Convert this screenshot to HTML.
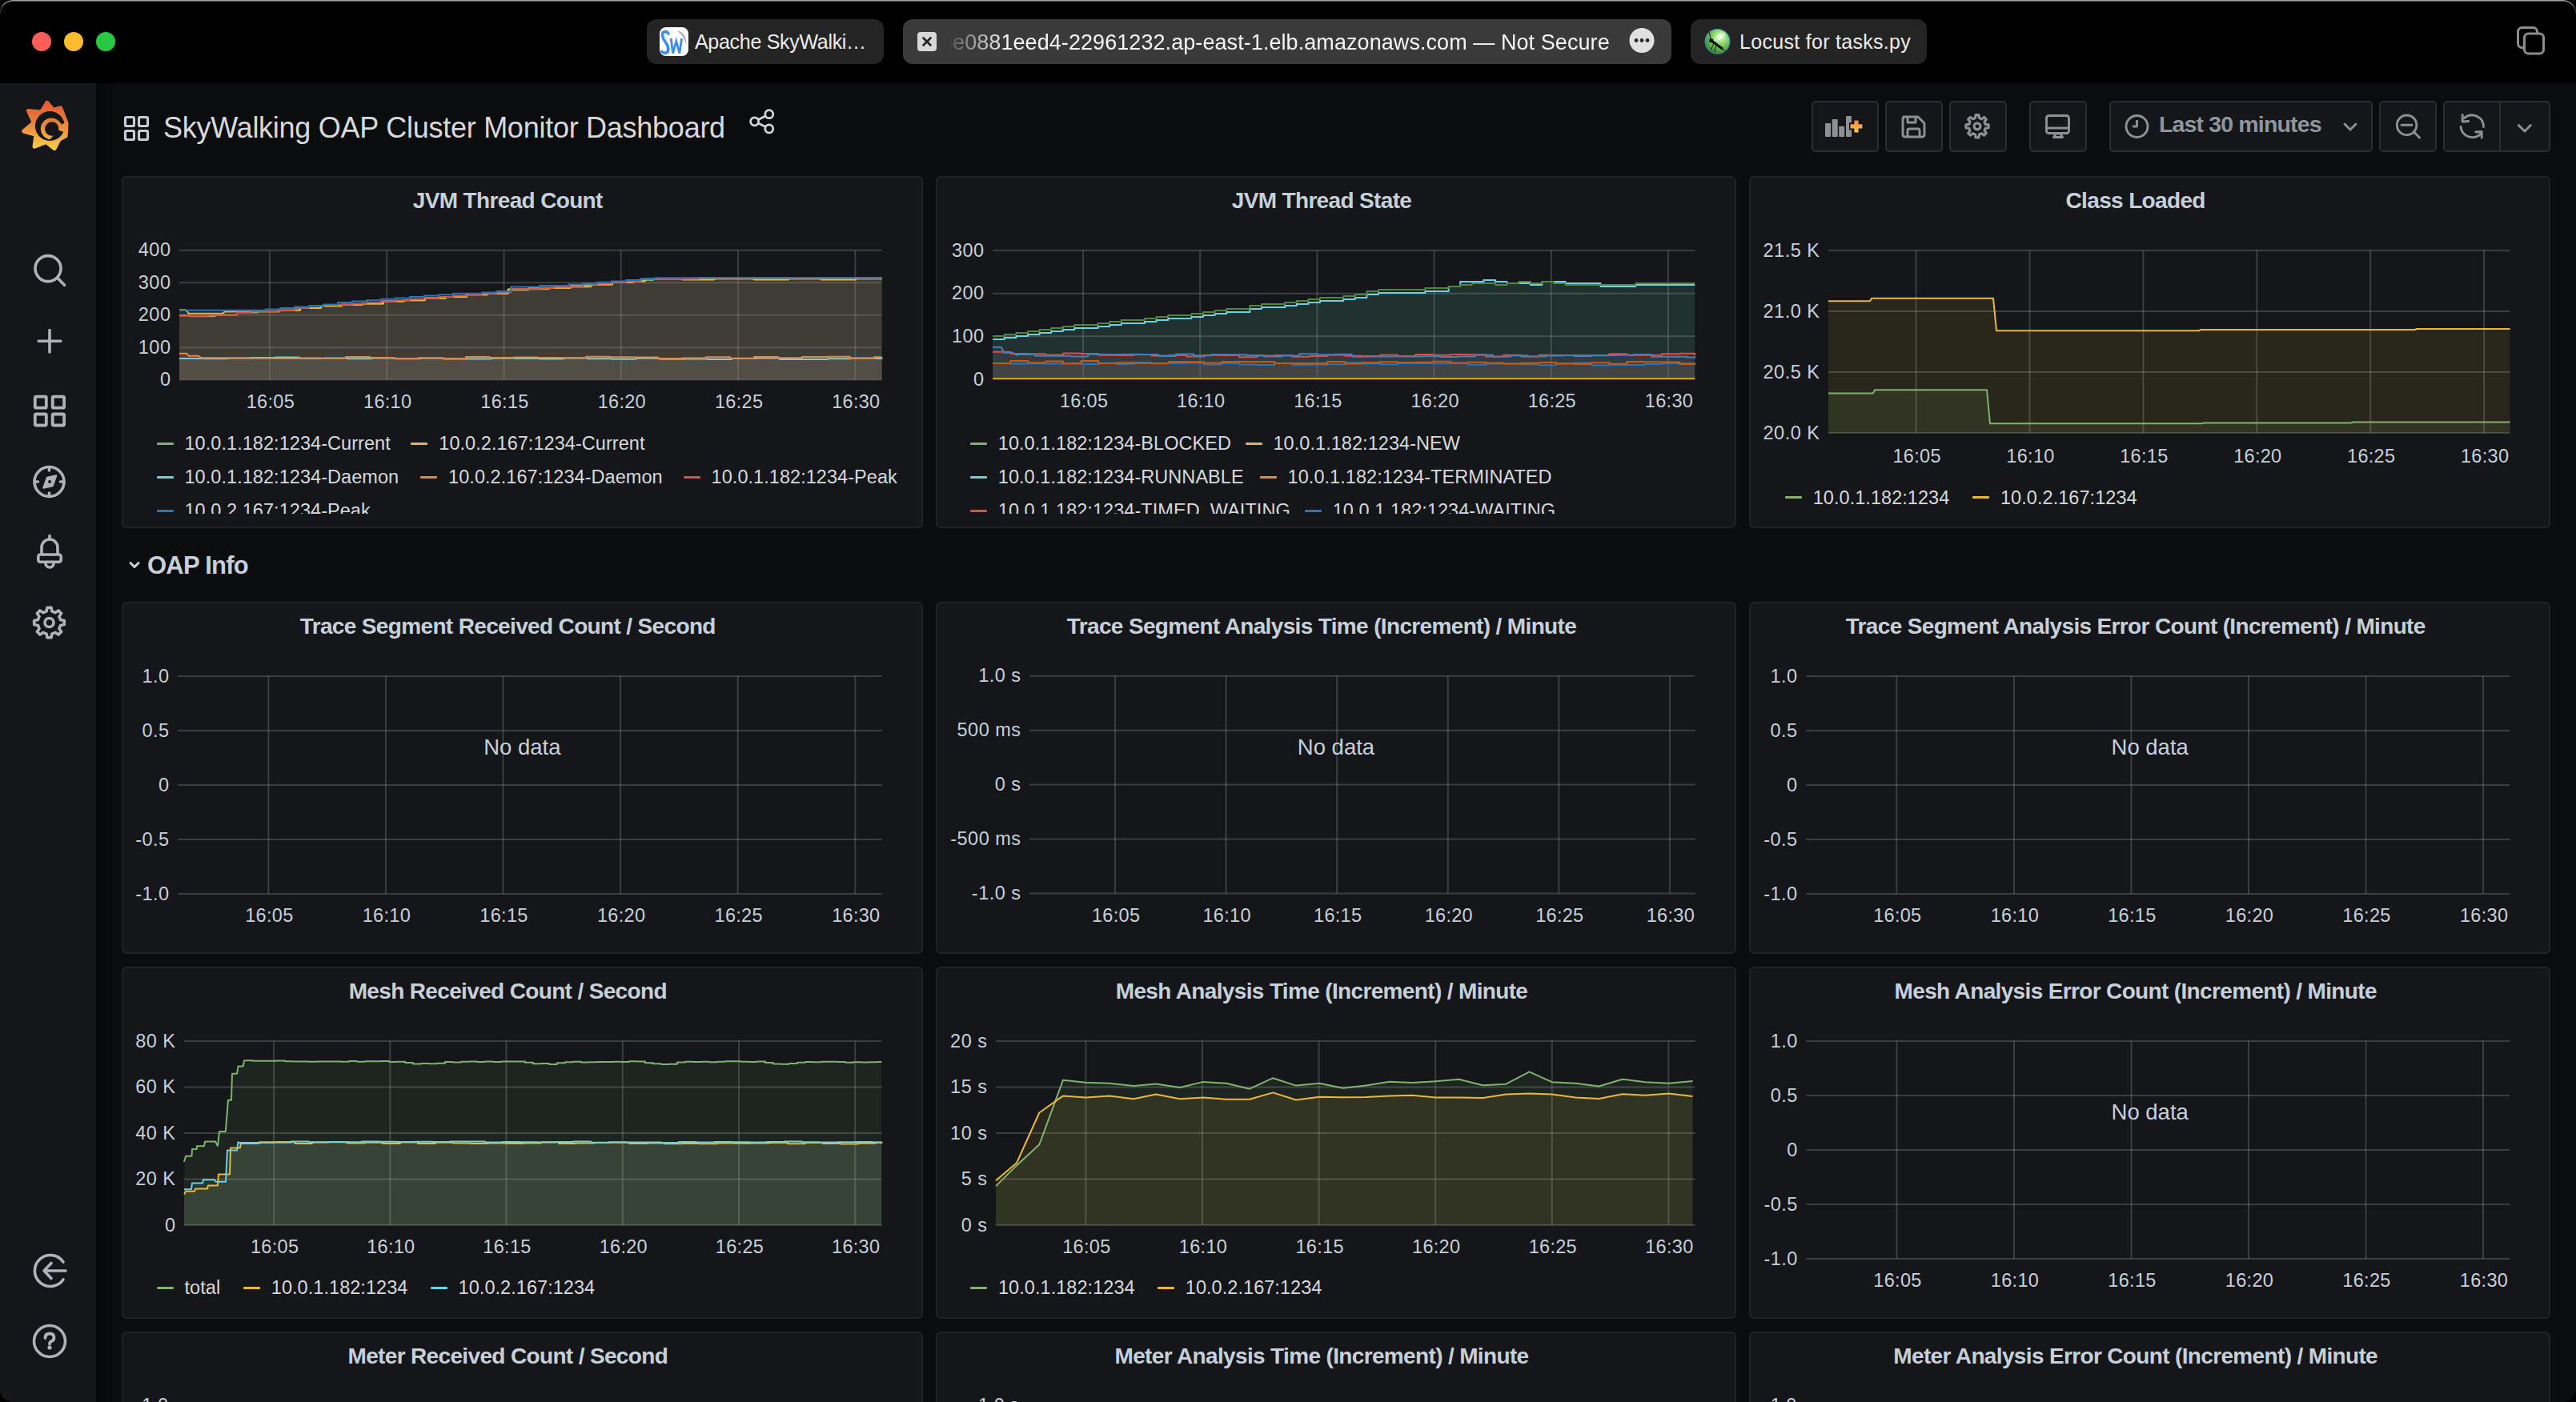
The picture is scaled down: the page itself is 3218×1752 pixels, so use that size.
<!DOCTYPE html><html><head><meta charset="utf-8"><style>
html,body{margin:0;padding:0;background:#000;width:3218px;height:1752px;overflow:hidden}
.win{position:absolute;left:0;top:0;width:3218px;height:1752px;border-radius:16px;overflow:hidden;background:#0b0c0e;font-family:"Liberation Sans", sans-serif}
.abs{position:absolute}
svg.abs{overflow:visible}
.tab{position:absolute;top:24px;height:56px;border-radius:12px}
.tabtxt{position:absolute;top:34px;font-size:25px;line-height:36px;color:#ececec;white-space:nowrap}
.panel{position:absolute;box-sizing:border-box;background:#141619;border:2px solid #202226;border-radius:6px}
.ptitle{position:absolute;width:1000px;text-align:center;font-size:28px;line-height:36px;font-weight:700;color:#c7d0d9;letter-spacing:-0.65px;white-space:nowrap}
.ax text{font-family:"Liberation Sans", sans-serif;font-size:23.5px;fill:#c7d0d9}
.ldash{position:absolute;width:21px;height:3px;border-radius:1px}
.ltext{position:absolute;font-size:23.5px;line-height:28px;color:#d8d9da;white-space:nowrap;letter-spacing:0.05px}
.nodata{position:absolute;width:400px;text-align:center;font-size:27.5px;line-height:30px;color:#c7d0d9;white-space:nowrap}
.dtitle{font-size:36px;line-height:44px;color:#d8d9da;letter-spacing:-0.26px;white-space:nowrap}
.btn{position:absolute;top:126px;height:64px;box-sizing:border-box;background:#141619;border:2px solid #2a2c31;border-radius:5px}
.tp{font-size:28.5px;line-height:36px;font-weight:700;color:#91959c;letter-spacing:-0.85px;white-space:nowrap}
.rowt{font-size:31px;line-height:36px;font-weight:700;color:#c7d0d9;letter-spacing:-0.75px;white-space:nowrap}
</style></head><body><div class="win"><div class="abs" style="left:0;top:0;width:3218px;height:104px;background:#000"></div>
<div class="abs" style="left:0;top:0;width:3218px;height:60px;border-radius:16px 16px 0 0;box-shadow:inset 0 1.5px 0 #a3a3a3"></div>
<div class="abs" style="left:40px;top:40px;width:24px;height:24px;border-radius:50%;background:#fe5f57"></div>
<div class="abs" style="left:80px;top:40px;width:24px;height:24px;border-radius:50%;background:#febc2e"></div>
<div class="abs" style="left:120px;top:40px;width:24px;height:24px;border-radius:50%;background:#28c840"></div>
<div class="tab" style="left:808px;width:296px;background:#242424"></div>
<svg class="abs" style="left:824px;top:34px" width="36" height="36"><rect x="0" y="0" width="36" height="36" rx="8" fill="#fff"/><path d="M11,8 Q9.5,5.2 6.5,5.5 Q3.2,6 3.5,10.5 Q4,14.5 7.5,19 Q11,23.5 10.8,28 Q10.5,32.3 6.5,32.3 Q4.2,32.3 2.8,30.5" fill="none" stroke="#3d8ef0" stroke-width="3.6" stroke-linecap="round"/><path d="M14.2,14 L16.6,32.5 L20.8,17.5 L24.8,32.5 L27.6,14" fill="none" stroke="#3d8ef0" stroke-width="2.8"/><path d="M22,4.5 Q34,6 33.2,22.5 Q31,11.5 22,4.5 Z" fill="#b3b3b3"/></svg>
<div class="tabtxt" style="left:868px;letter-spacing:-0.3px">Apache SkyWalki…</div>
<div class="tab" style="left:1128px;width:960px;background:#3a3a3a"></div>
<svg class="abs" style="left:1146px;top:40px" width="24" height="24"><rect width="24" height="24" rx="4" fill="#d8d8d8"/><path d="M7.5,7.5 L16.5,16.5 M16.5,7.5 L7.5,16.5" stroke="#222" stroke-width="2.6" stroke-linecap="round"/></svg>
<div class="abs" style="left:1188px;top:24px;width:840px;height:56px;overflow:hidden;-webkit-mask-image:linear-gradient(90deg,rgba(0,0,0,.15) 0,rgba(0,0,0,.45) 22px,rgba(0,0,0,1) 68px);mask-image:linear-gradient(90deg,rgba(0,0,0,.15) 0,rgba(0,0,0,.45) 22px,rgba(0,0,0,1) 68px)"><div class="tabtxt" style="left:-13px;top:11px;font-size:27px;letter-spacing:0.07px;color:#f4f4f4">de0881eed4-22961232.ap-east-1.elb.amazonaws.com — Not Secure</div></div>
<svg class="abs" style="left:2035px;top:35px" width="32" height="32"><circle cx="16" cy="15.5" r="15.5" fill="#e0e0e0"/><circle cx="9" cy="15.5" r="2.4" fill="#2a2a2a"/><circle cx="16" cy="15.5" r="2.4" fill="#2a2a2a"/><circle cx="23" cy="15.5" r="2.4" fill="#2a2a2a"/></svg>
<div class="tab" style="left:2112px;width:295px;background:#242424"></div>
<svg class="abs" style="left:2129px;top:35px" width="33" height="33"><defs><radialGradient id="lg" cx="0.62" cy="0.32" r="0.75"><stop offset="0" stop-color="#f0fff0"/><stop offset="0.3" stop-color="#9ee07e"/><stop offset="0.75" stop-color="#4fa53e"/><stop offset="1" stop-color="#2c6e36"/></radialGradient></defs><circle cx="16.5" cy="16.8" r="15.3" fill="url(#lg)" stroke="#3f9aa0" stroke-width="1.2"/><path d="M9,16 L22,25.5" stroke="#0c0c0c" stroke-width="3.2" stroke-linecap="round"/><circle cx="8.6" cy="15.5" r="2.6" fill="#0c0c0c"/><path d="M21,25 L28,30 M12,19 L8,28 M15,21 L13,30 M8,13 L6,5" stroke="#1a1a1a" stroke-width="1" fill="none"/><path d="M12,14 Q18,3 27,6 Q24,14 14,17 Z" fill="#ffffff" fill-opacity="0.35"/></svg>
<div class="tabtxt" style="left:2173px;letter-spacing:0.3px">Locust for tasks.py</div>
<svg class="abs" style="left:3140px;top:30px" width="44" height="44"><rect x="5.5" y="4.5" width="24" height="25" rx="5" fill="none" stroke="#8c8c8c" stroke-width="3"/><rect x="13.5" y="12" width="24" height="25" rx="5" fill="#000" stroke="#8c8c8c" stroke-width="3"/></svg>
<div class="abs" style="left:0;top:104px;width:120px;height:1648px;background:#141619"></div>
<div class="abs" style="left:120px;top:104px;width:60px;height:1648px;background:linear-gradient(90deg,rgba(0,0,0,0.5) 0,rgba(0,0,0,0.22) 10px,rgba(0,0,0,0.06) 28px,rgba(0,0,0,0) 50px)"></div>
<svg class="abs" style="left:0;top:0" width="120" height="220"><defs><linearGradient id="gl" x1="0" y1="128" x2="0" y2="188" gradientUnits="userSpaceOnUse"><stop offset="0" stop-color="#e05a33"/><stop offset="0.45" stop-color="#e9853a"/><stop offset="1" stop-color="#f5d44a"/></linearGradient></defs><path d="M35.4,138.4 L51.8,139.9 L58.8,128.1 L66.5,137.4 L75.6,134.7 L80.1,146.3 L83.0,154.1 L82.7,162.5 L82.0,169.9 L73.9,174.4 L68.0,185.5 L57.8,177.5 L43.0,183.2 L45.0,168.4 L29.7,164.0 L42.3,153.2 Z" fill="url(#gl)" stroke="url(#gl)" stroke-width="5" stroke-linejoin="round"/><circle cx="62.3" cy="157.5" r="18.4" fill="#141619"/><path d="M77.8,161 A13.5,13.5 0 1 0 62.5,174.3 Q64,171.5 67,169.4 A8.7,8.7 0 1 1 73.5,161 Z" fill="url(#gl)"/><path d="M73.3,156.5 L81.5,153.5 L84,166 L73.3,163 Z" fill="url(#gl)"/></svg>
<svg class="abs" style="left:0;top:104px" width="120" height="1648"><g fill="none" stroke="#aeb2b9" stroke-width="3.6" stroke-linecap="round" stroke-linejoin="round"><circle cx="60" cy="231.6" r="16"/><path d="M71.5,243.1 L80.5,252.2"/><path d="M62,308.5 L62,336 M48.2,322.2 L75.8,322.2"/><g stroke-width="3.8"><rect x="43.8" y="391.7" width="14" height="14" rx="1.5"/><rect x="65.7" y="391.7" width="14.4" height="14" rx="1.5"/><rect x="43.8" y="413.5" width="14" height="14" rx="1.5"/><rect x="65.7" y="413.5" width="14.4" height="14" rx="1.5"/></g><circle cx="61.5" cy="498" r="18.5"/><path d="M61.5,479.5 L61.5,484 M61.5,512 L61.5,516.5 M43,498 L47.5,498 M75.5,498 L80,498"/><path d="M52,588 L52,580 A10,10 0 0 1 72,580 L72,588"/><rect x="47.8" y="589" width="28.4" height="9.2" rx="2.5"/><path d="M57,600 A5,5 0 0 0 67,600"/><path d="M62,565.5 L62,569"/><path d="M75.6,670.6 L80.3,671.5 L80.3,676.5 L75.6,677.4 L73.9,681.6 L76.6,685.6 L73.1,689.1 L69.1,686.4 L64.9,688.1 L64.0,692.8 L59.0,692.8 L58.1,688.1 L53.9,686.4 L49.9,689.1 L46.4,685.6 L49.1,681.6 L47.4,677.4 L42.7,676.5 L42.7,671.5 L47.4,670.6 L49.1,666.4 L46.4,662.4 L49.9,658.9 L53.9,661.6 L58.1,659.9 L59.0,655.2 L64.0,655.2 L64.9,659.9 L69.1,661.6 L73.1,658.9 L76.6,662.4 L73.9,666.4 Z" stroke-width="3.6"/><circle cx="61.5" cy="674" r="5.5" stroke-width="3.6"/><path d="M79,1473 A19.5,19.5 0 1 0 79,1495"/><path d="M82,1484 L55,1484 M64,1474.5 L55,1484 L64,1493.5"/><circle cx="62" cy="1572" r="19.5"/></g><path d="M56.5,1568 Q56.5,1562.5 62,1562.5 Q67.5,1562.5 67.5,1567.5 Q67.5,1571 64,1572.3 Q62,1573 62,1575.5" fill="none" stroke="#aeb2b9" stroke-width="3.8" stroke-linecap="round"/><circle cx="62" cy="1580" r="2.6" fill="#aeb2b9"/><path d="M54.5,609.5 L59,597 L70,594.5 L65.5,607 Z" fill="#aeb2b9" stroke="#aeb2b9" stroke-width="2.5" stroke-linejoin="round" transform="translate(0,-104)"/><circle cx="62.1" cy="498" r="2" fill="#141619"/></svg>
<svg class="abs" style="left:150px;top:140px" width="40" height="40"><g fill="none" stroke="#c7ccd4" stroke-width="3.2"><rect x="6.5" y="6.5" width="11" height="11" rx="1.5"/><rect x="23.5" y="6.5" width="11" height="11" rx="1.5"/><rect x="6.5" y="23.5" width="11" height="11" rx="1.5"/><rect x="23.5" y="23.5" width="11" height="11" rx="1.5"/></g></svg>
<div class="abs dtitle" style="left:204px;top:138px">SkyWalking OAP Cluster Monitor Dashboard</div>
<svg class="abs" style="left:930px;top:130px" width="44" height="44"><g fill="none" stroke="#d0d5dd" stroke-width="2.8"><circle cx="12.6" cy="21.8" r="5"/><circle cx="30.8" cy="12.7" r="5"/><circle cx="30.8" cy="30.9" r="5"/><path d="M17.2,19.5 L26.3,15 M17.2,24.1 L26.3,28.6"/></g></svg>
<div class="btn" style="left:2263px;width:84px"></div>
<div class="btn" style="left:2355px;width:72px"></div>
<div class="btn" style="left:2435px;width:72px"></div>
<div class="btn" style="left:2535px;width:72px"></div>
<div class="btn" style="left:2635px;width:329px"></div>
<div class="btn" style="left:2972px;width:72px"></div>
<div class="btn" style="left:3052px;width:134px"></div>
<div class="abs" style="left:3122px;top:127px;width:2px;height:62px;background:#2a2c30"></div>
<svg class="abs" style="left:2263px;top:126px" width="923" height="64"><g fill="#8e9096"><rect x="17" y="28" width="7" height="17" rx="1"/><rect x="25.7" y="23" width="7" height="22" rx="1"/><rect x="34.2" y="31.8" width="7" height="13.2" rx="1"/><rect x="43" y="19" width="7" height="26" rx="1"/></g><defs><linearGradient id="og" x1="0" y1="0" x2="0" y2="1"><stop offset="0" stop-color="#f2854a"/><stop offset="1" stop-color="#f7c744"/></linearGradient></defs><path d="M47,31.8 L65,31.8 M56,23 L56,40.6" stroke="#111" stroke-width="9"/><path d="M48.5,31.8 L63.5,31.8 M56,24.5 L56,39.5" stroke="url(#og)" stroke-width="5.2"/><g fill="none" stroke="#8e9096" stroke-width="2.9" stroke-linejoin="round"><path d="M115,20 L133,20 L141,28 L141,42 Q141,45 138,45 L117,45 Q114,45 114,42 L114,23 Q114,20 117,20 Z"/><path d="M120,21 L120,27 L130,27 L130,21"/><path d="M120,44 L120,37 Q120,35 122,35 L133,35 Q135,35 135,37 L135,44"/><path d="M217.2,29.3 L221.1,29.9 L221.1,33.7 L217.2,34.3 L216.0,37.3 L218.3,40.4 L215.6,43.1 L212.5,40.8 L209.5,42.0 L208.9,45.9 L205.1,45.9 L204.5,42.0 L201.5,40.8 L198.4,43.1 L195.7,40.4 L198.0,37.3 L196.8,34.3 L192.9,33.7 L192.9,29.9 L196.8,29.3 L198.0,26.3 L195.7,23.2 L198.4,20.5 L201.5,22.8 L204.5,21.6 L205.1,17.7 L208.9,17.7 L209.5,21.6 L212.5,22.8 L215.6,20.5 L218.3,23.2 L216.0,26.3 Z" stroke-width="3.2"/><circle cx="207" cy="31.8" r="4.0" stroke-width="3.2"/><rect x="293.5" y="18.5" width="28" height="22" rx="3"/><path d="M294,34 L321,34"/><path d="M302.5,45.5 L313.5,45.5 L311,41 L305,41 Z"/><circle cx="406.5" cy="32" r="13.5"/><path d="M406.5,24 L406.5,32 L401,32"/><path d="M666,29 L673,36 L680,29" stroke-linecap="round"/><circle cx="743.6" cy="30.3" r="12.3"/><path d="M737,30.3 L750,30.3 M752.5,39 L759.5,46" stroke-linecap="round"/><path d="M815.5,21.5 A14.5,14.5 0 0 1 839.5,32.6" stroke-linecap="round"/><path d="M811,32.5 A14.5,14.5 0 0 0 836.5,40.5" stroke-linecap="round"/><path d="M813.2,17.5 L813.2,26 L820.7,25.5 M829.7,39 L837.2,38.5 L837.2,46" stroke-linecap="round"/><path d="M883.3,30.6 L891,38 L898.3,30.6" stroke-linecap="round"/></g></svg>
<div class="abs tp" style="left:2697px;top:137px">Last 30 minutes</div>
<svg class="abs" style="left:155px;top:692px" width="28" height="24"><path d="M8,11.5 L13,16.5 L18,11.5" fill="none" stroke="#c7d0d9" stroke-width="3" stroke-linecap="round" stroke-linejoin="round"/></svg>
<div class="abs rowt" style="left:184px;top:688.5px">OAP Info</div>
<div class="panel" style="left:152.00px;top:220px;width:1000.67px;height:440px"></div>
<div class="ptitle" style="left:134.3px;top:232.5px">JVM Thread Count</div>
<div class="panel" style="left:1168.67px;top:220px;width:1000.67px;height:440px"></div>
<div class="ptitle" style="left:1151.0px;top:232.5px">JVM Thread State</div>
<div class="panel" style="left:2185.33px;top:220px;width:1000.67px;height:440px"></div>
<div class="ptitle" style="left:2167.7px;top:232.5px">Class Loaded</div>
<svg class="abs" width="3218" height="1752" style="left:0;top:0"><g stroke="rgba(200,200,200,0.22)" stroke-width="2"><line x1="224.0" y1="312.8" x2="1101.7" y2="312.8"/><line x1="224.0" y1="353.2" x2="1101.7" y2="353.2"/><line x1="224.0" y1="393.7" x2="1101.7" y2="393.7"/><line x1="224.0" y1="434.2" x2="1101.7" y2="434.2"/><line x1="224.0" y1="474.6" x2="1101.7" y2="474.6"/><line x1="336.9" y1="312.8" x2="336.9" y2="474.6"/><line x1="483.2" y1="312.8" x2="483.2" y2="474.6"/><line x1="629.5" y1="312.8" x2="629.5" y2="474.6"/><line x1="775.8" y1="312.8" x2="775.8" y2="474.6"/><line x1="922.1" y1="312.8" x2="922.1" y2="474.6"/><line x1="1068.3" y1="312.8" x2="1068.3" y2="474.6"/></g>
<path d="M224.0,394.0 L236.0,394.0 L238.0,395.2 L268.0,395.2 L270.0,393.4 L296.0,393.4 L296.0,390.6 L322.0,390.6 L322.0,389.2 L348.0,389.2 L348.0,387.8 L374.0,387.8 L374.0,385.0 L400.0,385.0 L400.0,382.2 L426.0,382.2 L426.0,380.8 L452.0,380.8 L452.0,379.4 L478.0,379.4 L478.0,376.6 L504.0,376.6 L504.0,375.2 L530.0,375.2 L530.0,372.4 L556.0,372.4 L556.0,371.0 L582.0,371.0 L582.0,368.2 L608.0,368.2 L608.0,366.8 L634.0,366.8 L634.0,362.6 L660.0,362.6 L660.0,361.2 L686.0,361.2 L686.0,359.8 L712.0,359.8 L712.0,358.4 L738.0,358.4 L738.0,355.6 L764.0,355.6 L764.0,352.8 L790.0,352.8 L790.0,350.0 L816.0,350.0 L816.0,348.6 L842.0,348.6 L842.0,348.6 L868.0,348.6 L868.0,348.6 L894.0,348.6 L894.0,348.6 L920.0,348.6 L920.0,348.6 L946.0,348.6 L946.0,348.6 L972.0,348.6 L972.0,348.6 L998.0,348.6 L998.0,348.6 L1024.0,348.6 L1024.0,348.6 L1050.0,348.6 L1050.0,348.6 L1076.0,348.6 L1076.0,348.6 L1101.7,348.6 L1101.7,348.6 L1101.7,474.6 L224.0,474.6 Z" fill="#7EB26D" fill-opacity="0.1" stroke="none"/>
<path d="M224.0,387.2 L232.0,387.2 L236.0,391.8 L278.0,391.8 L281.0,389.4 L296.0,389.4 L297.0,389.2 L323.0,389.2 L323.0,389.2 L349.0,389.2 L349.0,387.8 L375.0,387.8 L375.0,385.0 L401.0,385.0 L401.0,382.2 L427.0,382.2 L427.0,380.8 L453.0,380.8 L453.0,379.4 L479.0,379.4 L479.0,376.6 L505.0,376.6 L505.0,375.2 L531.0,375.2 L531.0,372.4 L557.0,372.4 L557.0,371.0 L583.0,371.0 L583.0,368.2 L609.0,368.2 L609.0,366.8 L635.0,366.8 L635.0,361.2 L661.0,361.2 L661.0,359.8 L687.0,359.8 L687.0,359.8 L713.0,359.8 L713.0,357.0 L739.0,357.0 L739.0,355.6 L765.0,355.6 L765.0,352.8 L791.0,352.8 L791.0,351.4 L806.0,351.4 L806.0,348.6 L852.0,348.0 L853.0,349.5 L892.0,349.5 L893.0,348.0 L941.0,348.0 L942.0,349.5 L985.0,349.5 L986.0,348.0 L1025.0,348.0 L1026.0,349.5 L1069.0,349.5 L1070.0,347.5 L1101.7,347.5 L1101.7,474.6 L224.0,474.6 Z" fill="#EAB839" fill-opacity="0.1" stroke="none"/>
<path d="M224.0,448.1 L254.0,448.1 L254.0,448.2 L284.0,448.2 L284.0,447.5 L314.0,447.5 L314.0,447.1 L344.0,447.1 L344.0,446.6 L374.0,446.6 L374.0,448.0 L404.0,448.0 L404.0,447.6 L434.0,447.6 L434.0,448.3 L464.0,448.3 L464.0,447.5 L494.0,447.5 L494.0,448.3 L524.0,448.3 L524.0,447.4 L554.0,447.4 L554.0,448.5 L584.0,448.5 L584.0,448.4 L614.0,448.4 L614.0,447.8 L644.0,447.8 L644.0,448.1 L674.0,448.1 L674.0,448.4 L704.0,448.4 L704.0,447.4 L734.0,447.4 L734.0,448.2 L764.0,448.2 L764.0,448.7 L794.0,448.7 L794.0,447.7 L824.0,447.7 L824.0,448.8 L854.0,448.8 L854.0,448.6 L884.0,448.6 L884.0,448.9 L914.0,448.9 L914.0,448.0 L944.0,448.0 L944.0,447.5 L974.0,447.5 L974.0,449.0 L1004.0,449.0 L1004.0,449.0 L1034.0,449.0 L1034.0,448.3 L1064.0,448.3 L1064.0,447.6 L1094.0,447.6 L1094.0,447.9 L1101.7,447.9 L1101.7,448.8 L1101.7,474.6 L224.0,474.6 Z" fill="#6ED0E0" fill-opacity="0.1" stroke="none"/>
<path d="M224.0,441.7 L233.0,441.7 L236.0,444.8 L248.0,444.8 L251.0,447.0 L252.0,447.3 L282.0,447.3 L282.0,447.6 L312.0,447.6 L312.0,447.7 L342.0,447.7 L342.0,448.1 L372.0,448.1 L372.0,447.6 L402.0,447.6 L402.0,448.0 L432.0,448.0 L432.0,445.9 L462.0,445.9 L462.0,446.9 L492.0,446.9 L492.0,448.1 L522.0,448.1 L522.0,447.4 L552.0,447.4 L552.0,448.0 L582.0,448.0 L582.0,446.1 L612.0,446.1 L612.0,446.9 L642.0,446.9 L642.0,446.4 L672.0,446.4 L672.0,447.1 L702.0,447.1 L702.0,447.2 L732.0,447.2 L732.0,445.8 L762.0,445.8 L762.0,446.3 L792.0,446.3 L792.0,446.5 L822.0,446.5 L822.0,448.0 L852.0,448.0 L852.0,447.6 L882.0,447.6 L882.0,446.2 L912.0,446.2 L912.0,447.7 L942.0,447.7 L942.0,446.1 L972.0,446.1 L972.0,447.3 L1002.0,447.3 L1002.0,446.1 L1032.0,446.1 L1032.0,445.8 L1062.0,445.8 L1062.0,447.9 L1092.0,447.9 L1092.0,446.3 L1101.7,446.3 L1101.7,446.3 L1101.7,474.6 L224.0,474.6 Z" fill="#EF843C" fill-opacity="0.1" stroke="none"/>
<path d="M224.0,394.8 L242.0,394.8 L242.0,394.8 L260.0,394.8 L260.0,393.4 L278.0,393.4 L278.0,393.4 L296.0,393.4 L296.0,390.6 L314.0,390.6 L314.0,389.2 L332.0,389.2 L332.0,389.2 L350.0,389.2 L350.0,387.8 L368.0,387.8 L368.0,385.0 L386.0,385.0 L386.0,382.2 L404.0,382.2 L404.0,380.8 L422.0,380.8 L422.0,380.8 L440.0,380.8 L440.0,379.4 L458.0,379.4 L458.0,378.0 L476.0,378.0 L476.0,376.6 L494.0,376.6 L494.0,375.2 L512.0,375.2 L512.0,373.8 L530.0,373.8 L530.0,372.4 L548.0,372.4 L548.0,371.0 L566.0,371.0 L566.0,369.6 L584.0,369.6 L584.0,368.2 L602.0,368.2 L602.0,366.8 L620.0,366.8 L620.0,365.4 L638.0,365.4 L638.0,361.2 L656.0,361.2 L656.0,361.2 L674.0,361.2 L674.0,359.8 L692.0,359.8 L692.0,358.4 L710.0,358.4 L710.0,358.4 L728.0,358.4 L728.0,355.6 L746.0,355.6 L746.0,354.2 L764.0,354.2 L764.0,352.8 L782.0,352.8 L782.0,351.4 L800.0,351.4 L800.0,348.6 L818.0,348.6 L818.0,348.6 L836.0,348.6 L836.0,348.6 L854.0,348.6 L854.0,348.6 L872.0,348.6 L872.0,347.2 L890.0,347.2 L890.0,347.2 L908.0,347.2 L908.0,347.2 L926.0,347.2 L926.0,347.2 L944.0,347.2 L944.0,347.2 L962.0,347.2 L962.0,347.2 L980.0,347.2 L980.0,347.2 L998.0,347.2 L998.0,347.2 L1016.0,347.2 L1016.0,347.2 L1034.0,347.2 L1034.0,347.2 L1052.0,347.2 L1052.0,347.2 L1070.0,347.2 L1070.0,347.2 L1088.0,347.2 L1088.0,347.2 L1101.7,347.2 L1101.7,347.2 L1101.7,474.6 L224.0,474.6 Z" fill="#E24D42" fill-opacity="0.1" stroke="none"/>
<path d="M224.0,387.8 L242.0,387.8 L242.0,387.8 L260.0,387.8 L260.0,387.8 L278.0,387.8 L278.0,387.8 L296.0,387.8 L296.0,387.8 L314.0,387.8 L314.0,387.8 L332.0,387.8 L332.0,386.4 L350.0,386.4 L350.0,385.0 L368.0,385.0 L368.0,383.6 L386.0,383.6 L386.0,382.2 L404.0,382.2 L404.0,380.8 L422.0,380.8 L422.0,378.0 L440.0,378.0 L440.0,376.6 L458.0,376.6 L458.0,375.2 L476.0,375.2 L476.0,373.8 L494.0,373.8 L494.0,372.4 L512.0,372.4 L512.0,371.0 L530.0,371.0 L530.0,369.6 L548.0,369.6 L548.0,368.2 L566.0,368.2 L566.0,366.8 L584.0,366.8 L584.0,366.8 L602.0,366.8 L602.0,365.4 L620.0,365.4 L620.0,364.0 L638.0,364.0 L638.0,358.4 L656.0,358.4 L656.0,358.4 L674.0,358.4 L674.0,357.0 L692.0,357.0 L692.0,357.0 L710.0,357.0 L710.0,355.6 L728.0,355.6 L728.0,354.2 L746.0,354.2 L746.0,352.8 L764.0,352.8 L764.0,351.4 L782.0,351.4 L782.0,350.0 L800.0,350.0 L800.0,348.6 L818.0,348.6 L818.0,347.2 L836.0,347.2 L836.0,347.2 L854.0,347.2 L854.0,347.2 L872.0,347.2 L872.0,347.2 L890.0,347.2 L890.0,347.2 L908.0,347.2 L908.0,347.2 L926.0,347.2 L926.0,347.2 L944.0,347.2 L944.0,347.2 L962.0,347.2 L962.0,347.2 L980.0,347.2 L980.0,347.2 L998.0,347.2 L998.0,347.2 L1016.0,347.2 L1016.0,347.2 L1034.0,347.2 L1034.0,347.2 L1052.0,347.2 L1052.0,347.2 L1070.0,347.2 L1070.0,347.2 L1088.0,347.2 L1088.0,347.2 L1101.7,347.2 L1101.7,347.2 L1101.7,474.6 L224.0,474.6 Z" fill="#1F78C1" fill-opacity="0.1" stroke="none"/>
<path d="M224.0,394.0 L236.0,394.0 L238.0,395.2 L268.0,395.2 L270.0,393.4 L296.0,393.4 L296.0,390.6 L322.0,390.6 L322.0,389.2 L348.0,389.2 L348.0,387.8 L374.0,387.8 L374.0,385.0 L400.0,385.0 L400.0,382.2 L426.0,382.2 L426.0,380.8 L452.0,380.8 L452.0,379.4 L478.0,379.4 L478.0,376.6 L504.0,376.6 L504.0,375.2 L530.0,375.2 L530.0,372.4 L556.0,372.4 L556.0,371.0 L582.0,371.0 L582.0,368.2 L608.0,368.2 L608.0,366.8 L634.0,366.8 L634.0,362.6 L660.0,362.6 L660.0,361.2 L686.0,361.2 L686.0,359.8 L712.0,359.8 L712.0,358.4 L738.0,358.4 L738.0,355.6 L764.0,355.6 L764.0,352.8 L790.0,352.8 L790.0,350.0 L816.0,350.0 L816.0,348.6 L842.0,348.6 L842.0,348.6 L868.0,348.6 L868.0,348.6 L894.0,348.6 L894.0,348.6 L920.0,348.6 L920.0,348.6 L946.0,348.6 L946.0,348.6 L972.0,348.6 L972.0,348.6 L998.0,348.6 L998.0,348.6 L1024.0,348.6 L1024.0,348.6 L1050.0,348.6 L1050.0,348.6 L1076.0,348.6 L1076.0,348.6 L1101.7,348.6 L1101.7,348.6" fill="none" stroke="#7EB26D" stroke-width="2" stroke-linejoin="round"/>
<path d="M224.0,387.2 L232.0,387.2 L236.0,391.8 L278.0,391.8 L281.0,389.4 L296.0,389.4 L297.0,389.2 L323.0,389.2 L323.0,389.2 L349.0,389.2 L349.0,387.8 L375.0,387.8 L375.0,385.0 L401.0,385.0 L401.0,382.2 L427.0,382.2 L427.0,380.8 L453.0,380.8 L453.0,379.4 L479.0,379.4 L479.0,376.6 L505.0,376.6 L505.0,375.2 L531.0,375.2 L531.0,372.4 L557.0,372.4 L557.0,371.0 L583.0,371.0 L583.0,368.2 L609.0,368.2 L609.0,366.8 L635.0,366.8 L635.0,361.2 L661.0,361.2 L661.0,359.8 L687.0,359.8 L687.0,359.8 L713.0,359.8 L713.0,357.0 L739.0,357.0 L739.0,355.6 L765.0,355.6 L765.0,352.8 L791.0,352.8 L791.0,351.4 L806.0,351.4 L806.0,348.6 L852.0,348.0 L853.0,349.5 L892.0,349.5 L893.0,348.0 L941.0,348.0 L942.0,349.5 L985.0,349.5 L986.0,348.0 L1025.0,348.0 L1026.0,349.5 L1069.0,349.5 L1070.0,347.5 L1101.7,347.5" fill="none" stroke="#EAB839" stroke-width="2" stroke-linejoin="round"/>
<path d="M224.0,448.1 L254.0,448.1 L254.0,448.2 L284.0,448.2 L284.0,447.5 L314.0,447.5 L314.0,447.1 L344.0,447.1 L344.0,446.6 L374.0,446.6 L374.0,448.0 L404.0,448.0 L404.0,447.6 L434.0,447.6 L434.0,448.3 L464.0,448.3 L464.0,447.5 L494.0,447.5 L494.0,448.3 L524.0,448.3 L524.0,447.4 L554.0,447.4 L554.0,448.5 L584.0,448.5 L584.0,448.4 L614.0,448.4 L614.0,447.8 L644.0,447.8 L644.0,448.1 L674.0,448.1 L674.0,448.4 L704.0,448.4 L704.0,447.4 L734.0,447.4 L734.0,448.2 L764.0,448.2 L764.0,448.7 L794.0,448.7 L794.0,447.7 L824.0,447.7 L824.0,448.8 L854.0,448.8 L854.0,448.6 L884.0,448.6 L884.0,448.9 L914.0,448.9 L914.0,448.0 L944.0,448.0 L944.0,447.5 L974.0,447.5 L974.0,449.0 L1004.0,449.0 L1004.0,449.0 L1034.0,449.0 L1034.0,448.3 L1064.0,448.3 L1064.0,447.6 L1094.0,447.6 L1094.0,447.9 L1101.7,447.9 L1101.7,448.8" fill="none" stroke="#6ED0E0" stroke-width="2" stroke-linejoin="round"/>
<path d="M224.0,441.7 L233.0,441.7 L236.0,444.8 L248.0,444.8 L251.0,447.0 L252.0,447.3 L282.0,447.3 L282.0,447.6 L312.0,447.6 L312.0,447.7 L342.0,447.7 L342.0,448.1 L372.0,448.1 L372.0,447.6 L402.0,447.6 L402.0,448.0 L432.0,448.0 L432.0,445.9 L462.0,445.9 L462.0,446.9 L492.0,446.9 L492.0,448.1 L522.0,448.1 L522.0,447.4 L552.0,447.4 L552.0,448.0 L582.0,448.0 L582.0,446.1 L612.0,446.1 L612.0,446.9 L642.0,446.9 L642.0,446.4 L672.0,446.4 L672.0,447.1 L702.0,447.1 L702.0,447.2 L732.0,447.2 L732.0,445.8 L762.0,445.8 L762.0,446.3 L792.0,446.3 L792.0,446.5 L822.0,446.5 L822.0,448.0 L852.0,448.0 L852.0,447.6 L882.0,447.6 L882.0,446.2 L912.0,446.2 L912.0,447.7 L942.0,447.7 L942.0,446.1 L972.0,446.1 L972.0,447.3 L1002.0,447.3 L1002.0,446.1 L1032.0,446.1 L1032.0,445.8 L1062.0,445.8 L1062.0,447.9 L1092.0,447.9 L1092.0,446.3 L1101.7,446.3 L1101.7,446.3" fill="none" stroke="#EF843C" stroke-width="2" stroke-linejoin="round"/>
<path d="M224.0,394.8 L242.0,394.8 L242.0,394.8 L260.0,394.8 L260.0,393.4 L278.0,393.4 L278.0,393.4 L296.0,393.4 L296.0,390.6 L314.0,390.6 L314.0,389.2 L332.0,389.2 L332.0,389.2 L350.0,389.2 L350.0,387.8 L368.0,387.8 L368.0,385.0 L386.0,385.0 L386.0,382.2 L404.0,382.2 L404.0,380.8 L422.0,380.8 L422.0,380.8 L440.0,380.8 L440.0,379.4 L458.0,379.4 L458.0,378.0 L476.0,378.0 L476.0,376.6 L494.0,376.6 L494.0,375.2 L512.0,375.2 L512.0,373.8 L530.0,373.8 L530.0,372.4 L548.0,372.4 L548.0,371.0 L566.0,371.0 L566.0,369.6 L584.0,369.6 L584.0,368.2 L602.0,368.2 L602.0,366.8 L620.0,366.8 L620.0,365.4 L638.0,365.4 L638.0,361.2 L656.0,361.2 L656.0,361.2 L674.0,361.2 L674.0,359.8 L692.0,359.8 L692.0,358.4 L710.0,358.4 L710.0,358.4 L728.0,358.4 L728.0,355.6 L746.0,355.6 L746.0,354.2 L764.0,354.2 L764.0,352.8 L782.0,352.8 L782.0,351.4 L800.0,351.4 L800.0,348.6 L818.0,348.6 L818.0,348.6 L836.0,348.6 L836.0,348.6 L854.0,348.6 L854.0,348.6 L872.0,348.6 L872.0,347.2 L890.0,347.2 L890.0,347.2 L908.0,347.2 L908.0,347.2 L926.0,347.2 L926.0,347.2 L944.0,347.2 L944.0,347.2 L962.0,347.2 L962.0,347.2 L980.0,347.2 L980.0,347.2 L998.0,347.2 L998.0,347.2 L1016.0,347.2 L1016.0,347.2 L1034.0,347.2 L1034.0,347.2 L1052.0,347.2 L1052.0,347.2 L1070.0,347.2 L1070.0,347.2 L1088.0,347.2 L1088.0,347.2 L1101.7,347.2 L1101.7,347.2" fill="none" stroke="#E24D42" stroke-width="2" stroke-linejoin="round"/>
<path d="M224.0,387.8 L242.0,387.8 L242.0,387.8 L260.0,387.8 L260.0,387.8 L278.0,387.8 L278.0,387.8 L296.0,387.8 L296.0,387.8 L314.0,387.8 L314.0,387.8 L332.0,387.8 L332.0,386.4 L350.0,386.4 L350.0,385.0 L368.0,385.0 L368.0,383.6 L386.0,383.6 L386.0,382.2 L404.0,382.2 L404.0,380.8 L422.0,380.8 L422.0,378.0 L440.0,378.0 L440.0,376.6 L458.0,376.6 L458.0,375.2 L476.0,375.2 L476.0,373.8 L494.0,373.8 L494.0,372.4 L512.0,372.4 L512.0,371.0 L530.0,371.0 L530.0,369.6 L548.0,369.6 L548.0,368.2 L566.0,368.2 L566.0,366.8 L584.0,366.8 L584.0,366.8 L602.0,366.8 L602.0,365.4 L620.0,365.4 L620.0,364.0 L638.0,364.0 L638.0,358.4 L656.0,358.4 L656.0,358.4 L674.0,358.4 L674.0,357.0 L692.0,357.0 L692.0,357.0 L710.0,357.0 L710.0,355.6 L728.0,355.6 L728.0,354.2 L746.0,354.2 L746.0,352.8 L764.0,352.8 L764.0,351.4 L782.0,351.4 L782.0,350.0 L800.0,350.0 L800.0,348.6 L818.0,348.6 L818.0,347.2 L836.0,347.2 L836.0,347.2 L854.0,347.2 L854.0,347.2 L872.0,347.2 L872.0,347.2 L890.0,347.2 L890.0,347.2 L908.0,347.2 L908.0,347.2 L926.0,347.2 L926.0,347.2 L944.0,347.2 L944.0,347.2 L962.0,347.2 L962.0,347.2 L980.0,347.2 L980.0,347.2 L998.0,347.2 L998.0,347.2 L1016.0,347.2 L1016.0,347.2 L1034.0,347.2 L1034.0,347.2 L1052.0,347.2 L1052.0,347.2 L1070.0,347.2 L1070.0,347.2 L1088.0,347.2 L1088.0,347.2 L1101.7,347.2 L1101.7,347.2" fill="none" stroke="#1F78C1" stroke-width="2" stroke-linejoin="round"/>
<g class="ax"><text x="213.5" y="320.3" text-anchor="end" letter-spacing="0.5">400</text><text x="213.5" y="360.8" text-anchor="end" letter-spacing="0.5">300</text><text x="213.5" y="401.2" text-anchor="end" letter-spacing="0.5">200</text><text x="213.5" y="441.7" text-anchor="end" letter-spacing="0.5">100</text><text x="213.5" y="482.1" text-anchor="end" letter-spacing="0.5">0</text><text x="337.9" y="509.6" text-anchor="middle" letter-spacing="0.3">16:05</text><text x="484.2" y="509.6" text-anchor="middle" letter-spacing="0.3">16:10</text><text x="630.5" y="509.6" text-anchor="middle" letter-spacing="0.3">16:15</text><text x="776.8" y="509.6" text-anchor="middle" letter-spacing="0.3">16:20</text><text x="923.1" y="509.6" text-anchor="middle" letter-spacing="0.3">16:25</text><text x="1069.3" y="509.6" text-anchor="middle" letter-spacing="0.3">16:30</text></g></svg>
<div class="abs" style="left:154px;top:525px;width:996px;height:117px;overflow:hidden">
<div class="ldash" style="left:41.5px;top:27.7px;background:#7EB26D"></div>
<div class="ltext" style="left:76.5px;top:15.2px">10.0.1.182:1234-Current</div>
<div class="ldash" style="left:359.3px;top:27.7px;background:#EAB839"></div>
<div class="ltext" style="left:394.3px;top:15.2px">10.0.2.167:1234-Current</div>
<div class="ldash" style="left:41.5px;top:69.7px;background:#6ED0E0"></div>
<div class="ltext" style="left:76.5px;top:57.2px">10.0.1.182:1234-Daemon</div>
<div class="ldash" style="left:371.1px;top:69.7px;background:#EF843C"></div>
<div class="ltext" style="left:406.1px;top:57.2px">10.0.2.167:1234-Daemon</div>
<div class="ldash" style="left:699.6px;top:69.7px;background:#E24D42"></div>
<div class="ltext" style="left:734.6px;top:57.2px">10.0.1.182:1234-Peak</div>
<div class="ldash" style="left:41.5px;top:111.7px;background:#1F78C1"></div>
<div class="ltext" style="left:76.5px;top:99.2px">10.0.2.167:1234-Peak</div>
</div>
<svg class="abs" width="3218" height="1752" style="left:0;top:0"><g stroke="rgba(200,200,200,0.22)" stroke-width="2"><line x1="1240.2" y1="313.0" x2="2117.3" y2="313.0"/><line x1="1240.2" y1="366.7" x2="2117.3" y2="366.7"/><line x1="1240.2" y1="420.3" x2="2117.3" y2="420.3"/><line x1="1240.2" y1="474.0" x2="2117.3" y2="474.0"/><line x1="1353.1" y1="313.0" x2="1353.1" y2="474.0"/><line x1="1499.2" y1="313.0" x2="1499.2" y2="474.0"/><line x1="1645.4" y1="313.0" x2="1645.4" y2="474.0"/><line x1="1791.6" y1="313.0" x2="1791.6" y2="474.0"/><line x1="1937.8" y1="313.0" x2="1937.8" y2="474.0"/><line x1="2084.0" y1="313.0" x2="2084.0" y2="474.0"/></g>
<path d="M1240.2,424.0 L1254.8,424.0 L1254.8,422.0 L1269.4,422.0 L1269.4,420.0 L1284.0,420.0 L1284.0,418.0 L1298.6,418.0 L1298.6,416.0 L1313.2,416.0 L1313.2,414.0 L1327.8,414.0 L1327.8,412.0 L1342.4,412.0 L1342.4,410.0 L1357.0,410.0 L1357.0,410.0 L1371.6,410.0 L1371.6,408.0 L1386.2,408.0 L1386.2,406.0 L1400.8,406.0 L1400.8,404.0 L1415.4,404.0 L1415.4,404.0 L1430.0,404.0 L1430.0,402.0 L1444.6,402.0 L1444.6,400.0 L1459.2,400.0 L1459.2,398.0 L1473.8,398.0 L1473.8,398.0 L1488.4,398.0 L1488.4,396.0 L1503.0,396.0 L1503.0,394.0 L1517.6,394.0 L1517.6,392.0 L1532.2,392.0 L1532.2,390.0 L1546.8,390.0 L1546.8,390.0 L1561.4,390.0 L1561.4,386.0 L1576.0,386.0 L1576.0,384.0 L1590.6,384.0 L1590.6,384.0 L1605.2,384.0 L1605.2,382.0 L1619.8,382.0 L1619.8,380.0 L1634.4,380.0 L1634.4,378.0 L1649.0,378.0 L1649.0,376.0 L1663.6,376.0 L1663.6,376.0 L1678.2,376.0 L1678.2,374.0 L1692.8,374.0 L1692.8,372.0 L1707.4,372.0 L1707.4,368.0 L1722.0,368.0 L1722.0,366.0 L1736.6,366.0 L1736.6,366.0 L1751.2,366.0 L1751.2,366.0 L1765.8,366.0 L1765.8,366.0 L1780.4,366.0 L1780.4,364.0 L1795.0,364.0 L1795.0,364.0 L1809.6,364.0 L1809.6,358.0 L1824.2,358.0 L1824.2,352.0 L1838.8,352.0 L1838.8,352.0 L1853.4,352.0 L1853.4,350.0 L1868.0,350.0 L1868.0,352.0 L1882.6,352.0 L1882.6,354.0 L1897.2,354.0 L1897.2,354.0 L1911.8,354.0 L1911.8,356.0 L1926.4,356.0 L1926.4,352.0 L1941.0,352.0 L1941.0,352.0 L1955.6,352.0 L1955.6,354.0 L1970.2,354.0 L1970.2,354.0 L1984.8,354.0 L1984.8,354.0 L1999.4,354.0 L1999.4,358.0 L2014.0,358.0 L2014.0,358.0 L2028.6,358.0 L2028.6,358.0 L2043.2,358.0 L2043.2,356.0 L2057.8,356.0 L2057.8,356.0 L2072.4,356.0 L2072.4,356.0 L2087.0,356.0 L2087.0,356.0 L2101.6,356.0 L2101.6,356.0 L2116.2,356.0 L2116.2,356.0 L2117.3,356.0 L2117.3,356.0 L2117.3,474.0 L1240.2,474.0 Z" fill="#6ED0E0" fill-opacity="0.1" stroke="none"/>
<path d="M1240.2,439.7 L1262.2,439.7 L1262.2,442.0 L1284.2,442.0 L1284.2,442.2 L1306.2,442.2 L1306.2,443.4 L1328.2,443.4 L1328.2,441.6 L1350.2,441.6 L1350.2,441.9 L1372.2,441.9 L1372.2,443.8 L1394.2,443.8 L1394.2,443.9 L1416.2,443.9 L1416.2,443.1 L1438.2,443.1 L1438.2,444.6 L1460.2,444.6 L1460.2,444.1 L1482.2,444.1 L1482.2,445.6 L1504.2,445.6 L1504.2,443.8 L1526.2,443.8 L1526.2,444.0 L1548.2,444.0 L1548.2,446.2 L1570.2,446.2 L1570.2,444.4 L1592.2,444.4 L1592.2,444.0 L1614.2,444.0 L1614.2,445.7 L1636.2,445.7 L1636.2,445.1 L1658.2,445.1 L1658.2,443.5 L1680.2,443.5 L1680.2,444.7 L1702.2,444.7 L1702.2,445.0 L1724.2,445.0 L1724.2,443.4 L1746.2,443.4 L1746.2,444.9 L1768.2,444.9 L1768.2,443.1 L1790.2,443.1 L1790.2,443.8 L1812.2,443.8 L1812.2,442.9 L1834.2,442.9 L1834.2,443.2 L1856.2,443.2 L1856.2,445.6 L1878.2,445.6 L1878.2,443.7 L1900.2,443.7 L1900.2,445.6 L1922.2,445.6 L1922.2,443.7 L1944.2,443.7 L1944.2,444.1 L1966.2,444.1 L1966.2,444.9 L1988.2,444.9 L1988.2,444.2 L2010.2,444.2 L2010.2,442.2 L2032.2,442.2 L2032.2,443.7 L2054.2,443.7 L2054.2,443.7 L2076.2,443.7 L2076.2,442.2 L2098.2,442.2 L2098.2,441.8 L2117.3,441.8 L2117.3,444.2 L2117.3,474.0 L1240.2,474.0 Z" fill="#E24D42" fill-opacity="0.1" stroke="none"/>
<path d="M1240.2,454.1 L1262.2,454.1 L1262.2,454.5 L1284.2,454.5 L1284.2,454.3 L1306.2,454.3 L1306.2,454.4 L1328.2,454.4 L1328.2,454.3 L1350.2,454.3 L1350.2,455.1 L1372.2,455.1 L1372.2,453.8 L1394.2,453.8 L1394.2,455.0 L1416.2,455.0 L1416.2,453.0 L1438.2,453.0 L1438.2,454.0 L1460.2,454.0 L1460.2,454.1 L1482.2,454.1 L1482.2,453.5 L1504.2,453.5 L1504.2,455.4 L1526.2,455.4 L1526.2,454.1 L1548.2,454.1 L1548.2,455.6 L1570.2,455.6 L1570.2,456.1 L1592.2,456.1 L1592.2,453.9 L1614.2,453.9 L1614.2,456.0 L1636.2,456.0 L1636.2,455.7 L1658.2,455.7 L1658.2,455.3 L1680.2,455.3 L1680.2,453.2 L1702.2,453.2 L1702.2,454.6 L1724.2,454.6 L1724.2,455.2 L1746.2,455.2 L1746.2,454.1 L1768.2,454.1 L1768.2,453.9 L1790.2,453.9 L1790.2,454.2 L1812.2,454.2 L1812.2,454.1 L1834.2,454.1 L1834.2,455.8 L1856.2,455.8 L1856.2,454.4 L1878.2,454.4 L1878.2,454.6 L1900.2,454.6 L1900.2,455.3 L1922.2,455.3 L1922.2,456.3 L1944.2,456.3 L1944.2,454.2 L1966.2,454.2 L1966.2,453.5 L1988.2,453.5 L1988.2,456.4 L2010.2,456.4 L2010.2,456.0 L2032.2,456.0 L2032.2,455.9 L2054.2,455.9 L2054.2,455.0 L2076.2,455.0 L2076.2,454.1 L2098.2,454.1 L2098.2,453.9 L2117.3,453.9 L2117.3,454.4 L2117.3,474.0 L1240.2,474.0 Z" fill="#1F78C1" fill-opacity="0.1" stroke="none"/>
<path d="M1240.2,420.0 L1254.8,420.0 L1254.8,418.0 L1269.4,418.0 L1269.4,416.0 L1284.0,416.0 L1284.0,414.0 L1298.6,414.0 L1298.6,412.0 L1313.2,412.0 L1313.2,410.0 L1327.8,410.0 L1327.8,408.0 L1342.4,408.0 L1342.4,406.0 L1357.0,406.0 L1357.0,406.0 L1371.6,406.0 L1371.6,404.0 L1386.2,404.0 L1386.2,402.0 L1400.8,402.0 L1400.8,400.0 L1415.4,400.0 L1415.4,400.0 L1430.0,400.0 L1430.0,398.0 L1444.6,398.0 L1444.6,396.0 L1459.2,396.0 L1459.2,394.0 L1473.8,394.0 L1473.8,394.0 L1488.4,394.0 L1488.4,392.0 L1503.0,392.0 L1503.0,390.0 L1517.6,390.0 L1517.6,388.0 L1532.2,388.0 L1532.2,386.0 L1546.8,386.0 L1546.8,386.0 L1561.4,386.0 L1561.4,382.0 L1576.0,382.0 L1576.0,380.0 L1590.6,380.0 L1590.6,380.0 L1605.2,380.0 L1605.2,378.0 L1619.8,378.0 L1619.8,376.0 L1634.4,376.0 L1634.4,374.0 L1649.0,374.0 L1649.0,372.0 L1663.6,372.0 L1663.6,372.0 L1678.2,372.0 L1678.2,370.0 L1692.8,370.0 L1692.8,368.0 L1707.4,368.0 L1707.4,364.0 L1722.0,364.0 L1722.0,362.0 L1736.6,362.0 L1736.6,362.0 L1751.2,362.0 L1751.2,362.0 L1765.8,362.0 L1765.8,362.0 L1780.4,362.0 L1780.4,360.0 L1795.0,360.0 L1795.0,360.0 L1809.6,360.0 L1809.6,358.0 L1824.2,358.0 L1824.2,356.0 L1838.8,356.0 L1838.8,354.0 L1853.4,354.0 L1853.4,354.0 L1868.0,354.0 L1868.0,356.0 L1882.6,356.0 L1882.6,354.0 L1897.2,354.0 L1897.2,352.0 L1911.8,352.0 L1911.8,354.0 L1926.4,354.0 L1926.4,352.0 L1941.0,352.0 L1941.0,354.0 L1955.6,354.0 L1955.6,356.0 L1970.2,356.0 L1970.2,356.0 L1984.8,356.0 L1984.8,356.0 L1999.4,356.0 L1999.4,356.0 L2014.0,356.0 L2014.0,356.0 L2028.6,356.0 L2028.6,356.0 L2043.2,356.0 L2043.2,354.0 L2057.8,354.0 L2057.8,354.0 L2072.4,354.0 L2072.4,354.0 L2087.0,354.0 L2087.0,354.0 L2101.6,354.0 L2101.6,354.0 L2116.2,354.0 L2116.2,354.0 L2117.3,354.0 L2117.3,354.0 L2117.3,474.0 L1240.2,474.0 Z" fill="#508642" fill-opacity="0.1" stroke="none"/>
<path d="M1240.0,433.7 L1251.0,433.7 L1254.0,440.7 L1265.0,440.7 L1270.0,444.0 L1271.0,443.0 L1293.0,443.0 L1293.0,444.8 L1315.0,444.8 L1315.0,444.8 L1337.0,444.8 L1337.0,445.4 L1359.0,445.4 L1359.0,442.8 L1381.0,442.8 L1381.0,443.0 L1403.0,443.0 L1403.0,442.7 L1425.0,442.7 L1425.0,443.0 L1447.0,443.0 L1447.0,445.0 L1469.0,445.0 L1469.0,442.6 L1491.0,442.6 L1491.0,444.3 L1513.0,444.3 L1513.0,443.0 L1535.0,443.0 L1535.0,443.3 L1557.0,443.3 L1557.0,443.9 L1579.0,443.9 L1579.0,445.5 L1601.0,445.5 L1601.0,444.6 L1623.0,444.6 L1623.0,442.3 L1645.0,442.3 L1645.0,443.3 L1667.0,443.3 L1667.0,442.8 L1689.0,442.8 L1689.0,445.7 L1711.0,445.7 L1711.0,445.5 L1733.0,445.5 L1733.0,445.5 L1755.0,445.5 L1755.0,445.6 L1777.0,445.6 L1777.0,445.3 L1799.0,445.3 L1799.0,446.1 L1821.0,446.1 L1821.0,445.5 L1843.0,445.5 L1843.0,443.4 L1865.0,443.4 L1865.0,445.8 L1887.0,445.8 L1887.0,444.3 L1909.0,444.3 L1909.0,445.4 L1931.0,445.4 L1931.0,444.6 L1953.0,444.6 L1953.0,444.1 L1975.0,444.1 L1975.0,443.9 L1997.0,443.9 L1997.0,444.1 L2019.0,444.1 L2019.0,443.7 L2041.0,443.7 L2041.0,442.9 L2063.0,442.9 L2063.0,445.7 L2085.0,445.7 L2085.0,445.7 L2107.0,445.7 L2107.0,446.4 L2117.3,446.4 L2117.3,445.3 L2117.3,474.0 L1240.0,474.0 Z" fill="#447EBC" fill-opacity="0.1" stroke="none"/>
<path d="M1240.2,454.0 L1262.2,454.0 L1262.2,451.0 L1284.2,451.0 L1284.2,453.3 L1306.2,453.3 L1306.2,451.5 L1328.2,451.5 L1328.2,454.2 L1350.2,454.2 L1350.2,451.1 L1372.2,451.1 L1372.2,453.9 L1394.2,453.9 L1394.2,453.3 L1416.2,453.3 L1416.2,453.8 L1438.2,453.8 L1438.2,454.3 L1460.2,454.3 L1460.2,451.9 L1482.2,451.9 L1482.2,452.3 L1504.2,452.3 L1504.2,453.5 L1526.2,453.5 L1526.2,452.1 L1548.2,452.1 L1548.2,452.1 L1570.2,452.1 L1570.2,452.0 L1592.2,452.0 L1592.2,454.0 L1614.2,454.0 L1614.2,454.1 L1636.2,454.1 L1636.2,453.9 L1658.2,453.9 L1658.2,452.1 L1680.2,452.1 L1680.2,454.4 L1702.2,454.4 L1702.2,453.1 L1724.2,453.1 L1724.2,452.2 L1746.2,452.2 L1746.2,452.9 L1768.2,452.9 L1768.2,452.8 L1790.2,452.8 L1790.2,451.8 L1812.2,451.8 L1812.2,453.4 L1834.2,453.4 L1834.2,452.7 L1856.2,452.7 L1856.2,453.4 L1878.2,453.4 L1878.2,454.6 L1900.2,454.6 L1900.2,453.7 L1922.2,453.7 L1922.2,453.0 L1944.2,453.0 L1944.2,454.5 L1966.2,454.5 L1966.2,454.9 L1988.2,454.9 L1988.2,453.3 L2010.2,453.3 L2010.2,454.8 L2032.2,454.8 L2032.2,451.9 L2054.2,451.9 L2054.2,452.3 L2076.2,452.3 L2076.2,452.4 L2098.2,452.4 L2098.2,454.9 L2117.3,454.9 L2117.3,454.1 L2117.3,474.0 L1240.2,474.0 Z" fill="#C15C17" fill-opacity="0.1" stroke="none"/>
<path d="M1240.2,473.0 L2117.3,473.0 L2117.3,474.0 L1240.2,474.0 Z" fill="#CCA300" fill-opacity="0.1" stroke="none"/>
<path d="M1240.2,424.0 L1254.8,424.0 L1254.8,422.0 L1269.4,422.0 L1269.4,420.0 L1284.0,420.0 L1284.0,418.0 L1298.6,418.0 L1298.6,416.0 L1313.2,416.0 L1313.2,414.0 L1327.8,414.0 L1327.8,412.0 L1342.4,412.0 L1342.4,410.0 L1357.0,410.0 L1357.0,410.0 L1371.6,410.0 L1371.6,408.0 L1386.2,408.0 L1386.2,406.0 L1400.8,406.0 L1400.8,404.0 L1415.4,404.0 L1415.4,404.0 L1430.0,404.0 L1430.0,402.0 L1444.6,402.0 L1444.6,400.0 L1459.2,400.0 L1459.2,398.0 L1473.8,398.0 L1473.8,398.0 L1488.4,398.0 L1488.4,396.0 L1503.0,396.0 L1503.0,394.0 L1517.6,394.0 L1517.6,392.0 L1532.2,392.0 L1532.2,390.0 L1546.8,390.0 L1546.8,390.0 L1561.4,390.0 L1561.4,386.0 L1576.0,386.0 L1576.0,384.0 L1590.6,384.0 L1590.6,384.0 L1605.2,384.0 L1605.2,382.0 L1619.8,382.0 L1619.8,380.0 L1634.4,380.0 L1634.4,378.0 L1649.0,378.0 L1649.0,376.0 L1663.6,376.0 L1663.6,376.0 L1678.2,376.0 L1678.2,374.0 L1692.8,374.0 L1692.8,372.0 L1707.4,372.0 L1707.4,368.0 L1722.0,368.0 L1722.0,366.0 L1736.6,366.0 L1736.6,366.0 L1751.2,366.0 L1751.2,366.0 L1765.8,366.0 L1765.8,366.0 L1780.4,366.0 L1780.4,364.0 L1795.0,364.0 L1795.0,364.0 L1809.6,364.0 L1809.6,358.0 L1824.2,358.0 L1824.2,352.0 L1838.8,352.0 L1838.8,352.0 L1853.4,352.0 L1853.4,350.0 L1868.0,350.0 L1868.0,352.0 L1882.6,352.0 L1882.6,354.0 L1897.2,354.0 L1897.2,354.0 L1911.8,354.0 L1911.8,356.0 L1926.4,356.0 L1926.4,352.0 L1941.0,352.0 L1941.0,352.0 L1955.6,352.0 L1955.6,354.0 L1970.2,354.0 L1970.2,354.0 L1984.8,354.0 L1984.8,354.0 L1999.4,354.0 L1999.4,358.0 L2014.0,358.0 L2014.0,358.0 L2028.6,358.0 L2028.6,358.0 L2043.2,358.0 L2043.2,356.0 L2057.8,356.0 L2057.8,356.0 L2072.4,356.0 L2072.4,356.0 L2087.0,356.0 L2087.0,356.0 L2101.6,356.0 L2101.6,356.0 L2116.2,356.0 L2116.2,356.0 L2117.3,356.0 L2117.3,356.0" fill="none" stroke="#6ED0E0" stroke-width="2" stroke-linejoin="round"/>
<path d="M1240.2,439.7 L1262.2,439.7 L1262.2,442.0 L1284.2,442.0 L1284.2,442.2 L1306.2,442.2 L1306.2,443.4 L1328.2,443.4 L1328.2,441.6 L1350.2,441.6 L1350.2,441.9 L1372.2,441.9 L1372.2,443.8 L1394.2,443.8 L1394.2,443.9 L1416.2,443.9 L1416.2,443.1 L1438.2,443.1 L1438.2,444.6 L1460.2,444.6 L1460.2,444.1 L1482.2,444.1 L1482.2,445.6 L1504.2,445.6 L1504.2,443.8 L1526.2,443.8 L1526.2,444.0 L1548.2,444.0 L1548.2,446.2 L1570.2,446.2 L1570.2,444.4 L1592.2,444.4 L1592.2,444.0 L1614.2,444.0 L1614.2,445.7 L1636.2,445.7 L1636.2,445.1 L1658.2,445.1 L1658.2,443.5 L1680.2,443.5 L1680.2,444.7 L1702.2,444.7 L1702.2,445.0 L1724.2,445.0 L1724.2,443.4 L1746.2,443.4 L1746.2,444.9 L1768.2,444.9 L1768.2,443.1 L1790.2,443.1 L1790.2,443.8 L1812.2,443.8 L1812.2,442.9 L1834.2,442.9 L1834.2,443.2 L1856.2,443.2 L1856.2,445.6 L1878.2,445.6 L1878.2,443.7 L1900.2,443.7 L1900.2,445.6 L1922.2,445.6 L1922.2,443.7 L1944.2,443.7 L1944.2,444.1 L1966.2,444.1 L1966.2,444.9 L1988.2,444.9 L1988.2,444.2 L2010.2,444.2 L2010.2,442.2 L2032.2,442.2 L2032.2,443.7 L2054.2,443.7 L2054.2,443.7 L2076.2,443.7 L2076.2,442.2 L2098.2,442.2 L2098.2,441.8 L2117.3,441.8 L2117.3,444.2" fill="none" stroke="#E24D42" stroke-width="2" stroke-linejoin="round"/>
<path d="M1240.2,454.1 L1262.2,454.1 L1262.2,454.5 L1284.2,454.5 L1284.2,454.3 L1306.2,454.3 L1306.2,454.4 L1328.2,454.4 L1328.2,454.3 L1350.2,454.3 L1350.2,455.1 L1372.2,455.1 L1372.2,453.8 L1394.2,453.8 L1394.2,455.0 L1416.2,455.0 L1416.2,453.0 L1438.2,453.0 L1438.2,454.0 L1460.2,454.0 L1460.2,454.1 L1482.2,454.1 L1482.2,453.5 L1504.2,453.5 L1504.2,455.4 L1526.2,455.4 L1526.2,454.1 L1548.2,454.1 L1548.2,455.6 L1570.2,455.6 L1570.2,456.1 L1592.2,456.1 L1592.2,453.9 L1614.2,453.9 L1614.2,456.0 L1636.2,456.0 L1636.2,455.7 L1658.2,455.7 L1658.2,455.3 L1680.2,455.3 L1680.2,453.2 L1702.2,453.2 L1702.2,454.6 L1724.2,454.6 L1724.2,455.2 L1746.2,455.2 L1746.2,454.1 L1768.2,454.1 L1768.2,453.9 L1790.2,453.9 L1790.2,454.2 L1812.2,454.2 L1812.2,454.1 L1834.2,454.1 L1834.2,455.8 L1856.2,455.8 L1856.2,454.4 L1878.2,454.4 L1878.2,454.6 L1900.2,454.6 L1900.2,455.3 L1922.2,455.3 L1922.2,456.3 L1944.2,456.3 L1944.2,454.2 L1966.2,454.2 L1966.2,453.5 L1988.2,453.5 L1988.2,456.4 L2010.2,456.4 L2010.2,456.0 L2032.2,456.0 L2032.2,455.9 L2054.2,455.9 L2054.2,455.0 L2076.2,455.0 L2076.2,454.1 L2098.2,454.1 L2098.2,453.9 L2117.3,453.9 L2117.3,454.4" fill="none" stroke="#1F78C1" stroke-width="2" stroke-linejoin="round"/>
<path d="M1240.2,420.0 L1254.8,420.0 L1254.8,418.0 L1269.4,418.0 L1269.4,416.0 L1284.0,416.0 L1284.0,414.0 L1298.6,414.0 L1298.6,412.0 L1313.2,412.0 L1313.2,410.0 L1327.8,410.0 L1327.8,408.0 L1342.4,408.0 L1342.4,406.0 L1357.0,406.0 L1357.0,406.0 L1371.6,406.0 L1371.6,404.0 L1386.2,404.0 L1386.2,402.0 L1400.8,402.0 L1400.8,400.0 L1415.4,400.0 L1415.4,400.0 L1430.0,400.0 L1430.0,398.0 L1444.6,398.0 L1444.6,396.0 L1459.2,396.0 L1459.2,394.0 L1473.8,394.0 L1473.8,394.0 L1488.4,394.0 L1488.4,392.0 L1503.0,392.0 L1503.0,390.0 L1517.6,390.0 L1517.6,388.0 L1532.2,388.0 L1532.2,386.0 L1546.8,386.0 L1546.8,386.0 L1561.4,386.0 L1561.4,382.0 L1576.0,382.0 L1576.0,380.0 L1590.6,380.0 L1590.6,380.0 L1605.2,380.0 L1605.2,378.0 L1619.8,378.0 L1619.8,376.0 L1634.4,376.0 L1634.4,374.0 L1649.0,374.0 L1649.0,372.0 L1663.6,372.0 L1663.6,372.0 L1678.2,372.0 L1678.2,370.0 L1692.8,370.0 L1692.8,368.0 L1707.4,368.0 L1707.4,364.0 L1722.0,364.0 L1722.0,362.0 L1736.6,362.0 L1736.6,362.0 L1751.2,362.0 L1751.2,362.0 L1765.8,362.0 L1765.8,362.0 L1780.4,362.0 L1780.4,360.0 L1795.0,360.0 L1795.0,360.0 L1809.6,360.0 L1809.6,358.0 L1824.2,358.0 L1824.2,356.0 L1838.8,356.0 L1838.8,354.0 L1853.4,354.0 L1853.4,354.0 L1868.0,354.0 L1868.0,356.0 L1882.6,356.0 L1882.6,354.0 L1897.2,354.0 L1897.2,352.0 L1911.8,352.0 L1911.8,354.0 L1926.4,354.0 L1926.4,352.0 L1941.0,352.0 L1941.0,354.0 L1955.6,354.0 L1955.6,356.0 L1970.2,356.0 L1970.2,356.0 L1984.8,356.0 L1984.8,356.0 L1999.4,356.0 L1999.4,356.0 L2014.0,356.0 L2014.0,356.0 L2028.6,356.0 L2028.6,356.0 L2043.2,356.0 L2043.2,354.0 L2057.8,354.0 L2057.8,354.0 L2072.4,354.0 L2072.4,354.0 L2087.0,354.0 L2087.0,354.0 L2101.6,354.0 L2101.6,354.0 L2116.2,354.0 L2116.2,354.0 L2117.3,354.0 L2117.3,354.0" fill="none" stroke="#508642" stroke-width="2" stroke-linejoin="round"/>
<path d="M1240.0,433.7 L1251.0,433.7 L1254.0,440.7 L1265.0,440.7 L1270.0,444.0 L1271.0,443.0 L1293.0,443.0 L1293.0,444.8 L1315.0,444.8 L1315.0,444.8 L1337.0,444.8 L1337.0,445.4 L1359.0,445.4 L1359.0,442.8 L1381.0,442.8 L1381.0,443.0 L1403.0,443.0 L1403.0,442.7 L1425.0,442.7 L1425.0,443.0 L1447.0,443.0 L1447.0,445.0 L1469.0,445.0 L1469.0,442.6 L1491.0,442.6 L1491.0,444.3 L1513.0,444.3 L1513.0,443.0 L1535.0,443.0 L1535.0,443.3 L1557.0,443.3 L1557.0,443.9 L1579.0,443.9 L1579.0,445.5 L1601.0,445.5 L1601.0,444.6 L1623.0,444.6 L1623.0,442.3 L1645.0,442.3 L1645.0,443.3 L1667.0,443.3 L1667.0,442.8 L1689.0,442.8 L1689.0,445.7 L1711.0,445.7 L1711.0,445.5 L1733.0,445.5 L1733.0,445.5 L1755.0,445.5 L1755.0,445.6 L1777.0,445.6 L1777.0,445.3 L1799.0,445.3 L1799.0,446.1 L1821.0,446.1 L1821.0,445.5 L1843.0,445.5 L1843.0,443.4 L1865.0,443.4 L1865.0,445.8 L1887.0,445.8 L1887.0,444.3 L1909.0,444.3 L1909.0,445.4 L1931.0,445.4 L1931.0,444.6 L1953.0,444.6 L1953.0,444.1 L1975.0,444.1 L1975.0,443.9 L1997.0,443.9 L1997.0,444.1 L2019.0,444.1 L2019.0,443.7 L2041.0,443.7 L2041.0,442.9 L2063.0,442.9 L2063.0,445.7 L2085.0,445.7 L2085.0,445.7 L2107.0,445.7 L2107.0,446.4 L2117.3,446.4 L2117.3,445.3" fill="none" stroke="#447EBC" stroke-width="2" stroke-linejoin="round"/>
<path d="M1240.2,454.0 L1262.2,454.0 L1262.2,451.0 L1284.2,451.0 L1284.2,453.3 L1306.2,453.3 L1306.2,451.5 L1328.2,451.5 L1328.2,454.2 L1350.2,454.2 L1350.2,451.1 L1372.2,451.1 L1372.2,453.9 L1394.2,453.9 L1394.2,453.3 L1416.2,453.3 L1416.2,453.8 L1438.2,453.8 L1438.2,454.3 L1460.2,454.3 L1460.2,451.9 L1482.2,451.9 L1482.2,452.3 L1504.2,452.3 L1504.2,453.5 L1526.2,453.5 L1526.2,452.1 L1548.2,452.1 L1548.2,452.1 L1570.2,452.1 L1570.2,452.0 L1592.2,452.0 L1592.2,454.0 L1614.2,454.0 L1614.2,454.1 L1636.2,454.1 L1636.2,453.9 L1658.2,453.9 L1658.2,452.1 L1680.2,452.1 L1680.2,454.4 L1702.2,454.4 L1702.2,453.1 L1724.2,453.1 L1724.2,452.2 L1746.2,452.2 L1746.2,452.9 L1768.2,452.9 L1768.2,452.8 L1790.2,452.8 L1790.2,451.8 L1812.2,451.8 L1812.2,453.4 L1834.2,453.4 L1834.2,452.7 L1856.2,452.7 L1856.2,453.4 L1878.2,453.4 L1878.2,454.6 L1900.2,454.6 L1900.2,453.7 L1922.2,453.7 L1922.2,453.0 L1944.2,453.0 L1944.2,454.5 L1966.2,454.5 L1966.2,454.9 L1988.2,454.9 L1988.2,453.3 L2010.2,453.3 L2010.2,454.8 L2032.2,454.8 L2032.2,451.9 L2054.2,451.9 L2054.2,452.3 L2076.2,452.3 L2076.2,452.4 L2098.2,452.4 L2098.2,454.9 L2117.3,454.9 L2117.3,454.1" fill="none" stroke="#C15C17" stroke-width="2" stroke-linejoin="round"/>
<path d="M1240.2,473.0 L2117.3,473.0" fill="none" stroke="#CCA300" stroke-width="2" stroke-linejoin="round"/>
<g class="ax"><text x="1229.7" y="320.5" text-anchor="end" letter-spacing="0.5">300</text><text x="1229.7" y="374.2" text-anchor="end" letter-spacing="0.5">200</text><text x="1229.7" y="427.8" text-anchor="end" letter-spacing="0.5">100</text><text x="1229.7" y="481.5" text-anchor="end" letter-spacing="0.5">0</text><text x="1354.1" y="509.0" text-anchor="middle" letter-spacing="0.3">16:05</text><text x="1500.2" y="509.0" text-anchor="middle" letter-spacing="0.3">16:10</text><text x="1646.4" y="509.0" text-anchor="middle" letter-spacing="0.3">16:15</text><text x="1792.6" y="509.0" text-anchor="middle" letter-spacing="0.3">16:20</text><text x="1938.8" y="509.0" text-anchor="middle" letter-spacing="0.3">16:25</text><text x="2085.0" y="509.0" text-anchor="middle" letter-spacing="0.3">16:30</text></g></svg>
<div class="abs" style="left:1170px;top:525px;width:996px;height:117px;overflow:hidden">
<div class="ldash" style="left:41.8px;top:27.7px;background:#7EB26D"></div>
<div class="ltext" style="left:76.8px;top:15.2px">10.0.1.182:1234-BLOCKED</div>
<div class="ldash" style="left:385.5px;top:27.7px;background:#EAB839"></div>
<div class="ltext" style="left:420.5px;top:15.2px">10.0.1.182:1234-NEW</div>
<div class="ldash" style="left:41.8px;top:69.7px;background:#6ED0E0"></div>
<div class="ltext" style="left:76.8px;top:57.2px">10.0.1.182:1234-RUNNABLE</div>
<div class="ldash" style="left:403.6px;top:69.7px;background:#EF843C"></div>
<div class="ltext" style="left:438.6px;top:57.2px">10.0.1.182:1234-TERMINATED</div>
<div class="ldash" style="left:41.8px;top:111.7px;background:#E24D42"></div>
<div class="ltext" style="left:76.8px;top:99.2px">10.0.1.182:1234-TIMED_WAITING</div>
<div class="ldash" style="left:459.7px;top:111.7px;background:#1F78C1"></div>
<div class="ltext" style="left:494.7px;top:99.2px">10.0.1.182:1234-WAITING</div>
</div>
<svg class="abs" width="3218" height="1752" style="left:0;top:0"><g stroke="rgba(200,200,200,0.22)" stroke-width="2"><line x1="2284.0" y1="313.0" x2="3135.5" y2="313.0"/><line x1="2284.0" y1="389.0" x2="3135.5" y2="389.0"/><line x1="2284.0" y1="465.0" x2="3135.5" y2="465.0"/><line x1="2284.0" y1="541.0" x2="3135.5" y2="541.0"/><line x1="2393.6" y1="313.0" x2="2393.6" y2="541.0"/><line x1="2535.5" y1="313.0" x2="2535.5" y2="541.0"/><line x1="2677.4" y1="313.0" x2="2677.4" y2="541.0"/><line x1="2819.3" y1="313.0" x2="2819.3" y2="541.0"/><line x1="2961.2" y1="313.0" x2="2961.2" y2="541.0"/><line x1="3103.1" y1="313.0" x2="3103.1" y2="541.0"/></g>
<path d="M2284.0,491.4 L2340.0,491.4 L2342.0,487.3 L2482.0,487.3 L2486.0,529.3 L2751.0,529.3 L2753.0,528.5 L2937.0,528.5 L2939.0,527.5 L3135.5,527.5 L3135.5,541.0 L2284.0,541.0 Z" fill="#7EB26D" fill-opacity="0.1" stroke="none"/>
<path d="M2284.0,376.2 L2336.0,376.2 L2338.0,372.7 L2490.0,372.7 L2494.0,413.3 L2747.0,413.3 L2749.0,412.0 L3017.0,412.0 L3019.0,411.0 L3135.5,411.0 L3135.5,541.0 L2284.0,541.0 Z" fill="#EAB839" fill-opacity="0.1" stroke="none"/>
<path d="M2284.0,491.4 L2340.0,491.4 L2342.0,487.3 L2482.0,487.3 L2486.0,529.3 L2751.0,529.3 L2753.0,528.5 L2937.0,528.5 L2939.0,527.5 L3135.5,527.5" fill="none" stroke="#7EB26D" stroke-width="2" stroke-linejoin="round"/>
<path d="M2284.0,376.2 L2336.0,376.2 L2338.0,372.7 L2490.0,372.7 L2494.0,413.3 L2747.0,413.3 L2749.0,412.0 L3017.0,412.0 L3019.0,411.0 L3135.5,411.0" fill="none" stroke="#EAB839" stroke-width="2" stroke-linejoin="round"/>
<g class="ax"><text x="2273.5" y="320.5" text-anchor="end" letter-spacing="0.5">21.5 K</text><text x="2273.5" y="396.5" text-anchor="end" letter-spacing="0.5">21.0 K</text><text x="2273.5" y="472.5" text-anchor="end" letter-spacing="0.5">20.5 K</text><text x="2273.5" y="548.5" text-anchor="end" letter-spacing="0.5">20.0 K</text><text x="2394.6" y="577.5" text-anchor="middle" letter-spacing="0.3">16:05</text><text x="2536.5" y="577.5" text-anchor="middle" letter-spacing="0.3">16:10</text><text x="2678.4" y="577.5" text-anchor="middle" letter-spacing="0.3">16:15</text><text x="2820.3" y="577.5" text-anchor="middle" letter-spacing="0.3">16:20</text><text x="2962.2" y="577.5" text-anchor="middle" letter-spacing="0.3">16:25</text><text x="3104.1" y="577.5" text-anchor="middle" letter-spacing="0.3">16:30</text></g></svg>
<div class="ldash" style="left:2229.7px;top:620.1px;background:#7EB26D"></div>
<div class="ltext" style="left:2264.7px;top:607.6px">10.0.1.182:1234</div>
<div class="ldash" style="left:2464.0px;top:620.1px;background:#EAB839"></div>
<div class="ltext" style="left:2499.0px;top:607.6px">10.0.2.167:1234</div>
<div class="panel" style="left:152.00px;top:752px;width:1000.67px;height:440px"></div>
<div class="ptitle" style="left:134.3px;top:764.5px">Trace Segment Received Count / Second</div>
<div class="panel" style="left:1168.67px;top:752px;width:1000.67px;height:440px"></div>
<div class="ptitle" style="left:1151.0px;top:764.5px">Trace Segment Analysis Time (Increment) / Minute</div>
<div class="panel" style="left:2185.33px;top:752px;width:1000.67px;height:440px"></div>
<div class="ptitle" style="left:2167.7px;top:764.5px">Trace Segment Analysis Error Count (Increment) / Minute</div>
<svg class="abs" width="3218" height="1752" style="left:0;top:0"><g stroke="rgba(200,200,200,0.22)" stroke-width="2"><line x1="222.2" y1="845.0" x2="1101.7" y2="845.0"/><line x1="222.2" y1="913.0" x2="1101.7" y2="913.0"/><line x1="222.2" y1="981.0" x2="1101.7" y2="981.0"/><line x1="222.2" y1="1049.0" x2="1101.7" y2="1049.0"/><line x1="222.2" y1="1117.0" x2="1101.7" y2="1117.0"/><line x1="335.4" y1="845.0" x2="335.4" y2="1117.0"/><line x1="481.9" y1="845.0" x2="481.9" y2="1117.0"/><line x1="628.5" y1="845.0" x2="628.5" y2="1117.0"/><line x1="775.1" y1="845.0" x2="775.1" y2="1117.0"/><line x1="921.7" y1="845.0" x2="921.7" y2="1117.0"/><line x1="1068.3" y1="845.0" x2="1068.3" y2="1117.0"/></g>
<g class="ax"><text x="211.7" y="852.5" text-anchor="end" letter-spacing="0.5">1.0</text><text x="211.7" y="920.5" text-anchor="end" letter-spacing="0.5">0.5</text><text x="211.7" y="988.5" text-anchor="end" letter-spacing="0.5">0</text><text x="211.7" y="1056.5" text-anchor="end" letter-spacing="0.5">-0.5</text><text x="211.7" y="1124.5" text-anchor="end" letter-spacing="0.5">-1.0</text><text x="336.4" y="1152.0" text-anchor="middle" letter-spacing="0.3">16:05</text><text x="482.9" y="1152.0" text-anchor="middle" letter-spacing="0.3">16:10</text><text x="629.5" y="1152.0" text-anchor="middle" letter-spacing="0.3">16:15</text><text x="776.1" y="1152.0" text-anchor="middle" letter-spacing="0.3">16:20</text><text x="922.7" y="1152.0" text-anchor="middle" letter-spacing="0.3">16:25</text><text x="1069.3" y="1152.0" text-anchor="middle" letter-spacing="0.3">16:30</text></g></svg>
<svg class="abs" width="3218" height="1752" style="left:0;top:0"><g stroke="rgba(200,200,200,0.22)" stroke-width="2"><line x1="1286.1" y1="844.7" x2="2117.5" y2="844.7"/><line x1="1286.1" y1="912.7" x2="2117.5" y2="912.7"/><line x1="1286.1" y1="980.6" x2="2117.5" y2="980.6"/><line x1="1286.1" y1="1048.5" x2="2117.5" y2="1048.5"/><line x1="1286.1" y1="1116.5" x2="2117.5" y2="1116.5"/><line x1="1393.1" y1="844.7" x2="1393.1" y2="1116.5"/><line x1="1531.6" y1="844.7" x2="1531.6" y2="1116.5"/><line x1="1670.2" y1="844.7" x2="1670.2" y2="1116.5"/><line x1="1808.8" y1="844.7" x2="1808.8" y2="1116.5"/><line x1="1947.3" y1="844.7" x2="1947.3" y2="1116.5"/><line x1="2085.9" y1="844.7" x2="2085.9" y2="1116.5"/></g>
<g class="ax"><text x="1275.6" y="852.2" text-anchor="end" letter-spacing="0.5">1.0 s</text><text x="1275.6" y="920.2" text-anchor="end" letter-spacing="0.5">500 ms</text><text x="1275.6" y="988.1" text-anchor="end" letter-spacing="0.5">0 s</text><text x="1275.6" y="1056.0" text-anchor="end" letter-spacing="0.5">-500 ms</text><text x="1275.6" y="1124.0" text-anchor="end" letter-spacing="0.5">-1.0 s</text><text x="1394.1" y="1151.5" text-anchor="middle" letter-spacing="0.3">16:05</text><text x="1532.6" y="1151.5" text-anchor="middle" letter-spacing="0.3">16:10</text><text x="1671.2" y="1151.5" text-anchor="middle" letter-spacing="0.3">16:15</text><text x="1809.8" y="1151.5" text-anchor="middle" letter-spacing="0.3">16:20</text><text x="1948.3" y="1151.5" text-anchor="middle" letter-spacing="0.3">16:25</text><text x="2086.9" y="1151.5" text-anchor="middle" letter-spacing="0.3">16:30</text></g></svg>
<svg class="abs" width="3218" height="1752" style="left:0;top:0"><g stroke="rgba(200,200,200,0.22)" stroke-width="2"><line x1="2256.2" y1="845.0" x2="3135.5" y2="845.0"/><line x1="2256.2" y1="913.0" x2="3135.5" y2="913.0"/><line x1="2256.2" y1="981.0" x2="3135.5" y2="981.0"/><line x1="2256.2" y1="1049.0" x2="3135.5" y2="1049.0"/><line x1="2256.2" y1="1117.0" x2="3135.5" y2="1117.0"/><line x1="2369.3" y1="845.0" x2="2369.3" y2="1117.0"/><line x1="2515.9" y1="845.0" x2="2515.9" y2="1117.0"/><line x1="2662.4" y1="845.0" x2="2662.4" y2="1117.0"/><line x1="2809.0" y1="845.0" x2="2809.0" y2="1117.0"/><line x1="2955.5" y1="845.0" x2="2955.5" y2="1117.0"/><line x1="3102.1" y1="845.0" x2="3102.1" y2="1117.0"/></g>
<g class="ax"><text x="2245.7" y="852.5" text-anchor="end" letter-spacing="0.5">1.0</text><text x="2245.7" y="920.5" text-anchor="end" letter-spacing="0.5">0.5</text><text x="2245.7" y="988.5" text-anchor="end" letter-spacing="0.5">0</text><text x="2245.7" y="1056.5" text-anchor="end" letter-spacing="0.5">-0.5</text><text x="2245.7" y="1124.5" text-anchor="end" letter-spacing="0.5">-1.0</text><text x="2370.3" y="1152.0" text-anchor="middle" letter-spacing="0.3">16:05</text><text x="2516.9" y="1152.0" text-anchor="middle" letter-spacing="0.3">16:10</text><text x="2663.4" y="1152.0" text-anchor="middle" letter-spacing="0.3">16:15</text><text x="2810.0" y="1152.0" text-anchor="middle" letter-spacing="0.3">16:20</text><text x="2956.5" y="1152.0" text-anchor="middle" letter-spacing="0.3">16:25</text><text x="3103.1" y="1152.0" text-anchor="middle" letter-spacing="0.3">16:30</text></g></svg>
<div class="nodata" style="left:452.3px;top:918.7px">No data</div>
<div class="nodata" style="left:1469.0px;top:918.7px">No data</div>
<div class="nodata" style="left:2485.7px;top:918.7px">No data</div>
<div class="panel" style="left:152.00px;top:1208px;width:1000.67px;height:440px"></div>
<div class="ptitle" style="left:134.3px;top:1220.5px">Mesh Received Count / Second</div>
<div class="panel" style="left:1168.67px;top:1208px;width:1000.67px;height:440px"></div>
<div class="ptitle" style="left:1151.0px;top:1220.5px">Mesh Analysis Time (Increment) / Minute</div>
<div class="panel" style="left:2185.33px;top:1208px;width:1000.67px;height:440px"></div>
<div class="ptitle" style="left:2167.7px;top:1220.5px">Mesh Analysis Error Count (Increment) / Minute</div>
<svg class="abs" width="3218" height="1752" style="left:0;top:0"><g stroke="rgba(200,200,200,0.22)" stroke-width="2"><line x1="230.0" y1="1301.0" x2="1101.3" y2="1301.0"/><line x1="230.0" y1="1358.5" x2="1101.3" y2="1358.5"/><line x1="230.0" y1="1416.0" x2="1101.3" y2="1416.0"/><line x1="230.0" y1="1473.5" x2="1101.3" y2="1473.5"/><line x1="230.0" y1="1531.0" x2="1101.3" y2="1531.0"/><line x1="342.1" y1="1301.0" x2="342.1" y2="1531.0"/><line x1="487.3" y1="1301.0" x2="487.3" y2="1531.0"/><line x1="632.5" y1="1301.0" x2="632.5" y2="1531.0"/><line x1="777.8" y1="1301.0" x2="777.8" y2="1531.0"/><line x1="923.0" y1="1301.0" x2="923.0" y2="1531.0"/><line x1="1068.2" y1="1301.0" x2="1068.2" y2="1531.0"/></g>
<path d="M230.0,1451.7 L232.0,1444.8 L239.5,1444.8 L240.0,1436.0 L245.7,1436.0 L246.0,1432.2 L255.0,1432.2 L256.0,1426.6 L269.0,1426.6 L272.0,1432.0 L274.0,1414.0 L281.8,1414.0 L285.0,1374.8 L289.0,1374.8 L290.0,1341.8 L296.0,1341.8 L297.5,1332.4 L303.8,1332.4 L305.0,1325.5 L306.0,1325.2 L316.0,1325.2 L316.0,1325.8 L326.0,1325.8 L326.0,1325.8 L336.0,1325.8 L336.0,1325.8 L346.0,1325.8 L346.0,1325.6 L356.0,1325.6 L356.0,1326.3 L366.0,1326.3 L366.0,1326.5 L376.0,1326.5 L376.0,1326.4 L386.0,1326.4 L386.0,1326.7 L396.0,1326.7 L396.0,1326.6 L406.0,1326.6 L406.0,1326.4 L416.0,1326.4 L416.0,1326.6 L426.0,1326.6 L426.0,1326.7 L436.0,1326.7 L436.0,1326.1 L446.0,1326.1 L446.0,1326.8 L456.0,1326.8 L456.0,1326.2 L466.0,1326.2 L466.0,1326.2 L476.0,1326.2 L476.0,1326.0 L486.0,1326.0 L486.0,1327.0 L496.0,1327.0 L496.0,1326.7 L506.0,1326.7 L506.0,1328.1 L516.0,1328.1 L516.0,1329.6 L526.0,1329.6 L526.0,1329.0 L536.0,1329.0 L536.0,1329.3 L546.0,1329.3 L546.0,1328.7 L556.0,1328.7 L556.0,1327.1 L566.0,1327.1 L566.0,1327.4 L576.0,1327.4 L576.0,1326.8 L586.0,1326.8 L586.0,1326.5 L596.0,1326.5 L596.0,1327.1 L606.0,1327.1 L606.0,1326.4 L616.0,1326.4 L616.0,1327.1 L626.0,1327.1 L626.0,1326.6 L636.0,1326.6 L636.0,1326.6 L646.0,1326.6 L646.0,1326.4 L656.0,1326.4 L656.0,1327.7 L666.0,1327.7 L666.0,1329.2 L676.0,1329.2 L676.0,1329.0 L686.0,1329.0 L686.0,1329.9 L696.0,1329.9 L696.0,1328.2 L706.0,1328.2 L706.0,1327.3 L716.0,1327.3 L716.0,1326.7 L726.0,1326.7 L726.0,1327.4 L736.0,1327.4 L736.0,1327.2 L746.0,1327.2 L746.0,1327.0 L756.0,1327.0 L756.0,1327.0 L766.0,1327.0 L766.0,1326.8 L776.0,1326.8 L776.0,1326.9 L786.0,1326.9 L786.0,1326.2 L796.0,1326.2 L796.0,1326.5 L806.0,1326.5 L806.0,1328.3 L816.0,1328.3 L816.0,1329.2 L826.0,1329.2 L826.0,1329.9 L836.0,1329.9 L836.0,1329.7 L846.0,1329.7 L846.0,1327.6 L856.0,1327.6 L856.0,1326.8 L866.0,1326.8 L866.0,1326.9 L876.0,1326.9 L876.0,1326.8 L886.0,1326.8 L886.0,1327.3 L896.0,1327.3 L896.0,1326.7 L906.0,1326.7 L906.0,1326.2 L916.0,1326.2 L916.0,1326.3 L926.0,1326.3 L926.0,1326.8 L936.0,1326.8 L936.0,1327.1 L946.0,1327.1 L946.0,1326.5 L956.0,1326.5 L956.0,1328.0 L966.0,1328.0 L966.0,1329.6 L976.0,1329.6 L976.0,1329.7 L986.0,1329.7 L986.0,1329.1 L996.0,1329.1 L996.0,1327.8 L1006.0,1327.8 L1006.0,1327.1 L1016.0,1327.1 L1016.0,1327.2 L1026.0,1327.2 L1026.0,1326.8 L1036.0,1326.8 L1036.0,1326.8 L1046.0,1326.8 L1046.0,1327.1 L1056.0,1327.1 L1056.0,1327.7 L1066.0,1327.7 L1066.0,1327.2 L1076.0,1327.2 L1076.0,1327.5 L1086.0,1327.5 L1086.0,1327.2 L1096.0,1327.2 L1096.0,1327.1 L1101.3,1327.1 L1101.3,1327.1 L1101.3,1531.0 L230.0,1531.0 Z" fill="#7EB26D" fill-opacity="0.1" stroke="none"/>
<path d="M230.0,1492.5 L232.0,1488.7 L243.0,1488.7 L244.0,1485.6 L259.0,1485.6 L260.0,1481.5 L272.0,1481.5 L273.0,1467.4 L287.0,1467.4 L288.0,1434.4 L300.0,1434.4 L301.0,1428.0 L302.0,1428.9 L324.0,1428.9 L324.0,1427.3 L346.0,1427.3 L346.0,1427.1 L368.0,1427.1 L368.0,1429.0 L390.0,1429.0 L390.0,1427.4 L412.0,1427.4 L412.0,1427.3 L434.0,1427.3 L434.0,1428.4 L456.0,1428.4 L456.0,1427.8 L478.0,1427.8 L478.0,1428.9 L500.0,1428.9 L500.0,1427.6 L522.0,1427.6 L522.0,1429.1 L544.0,1429.1 L544.0,1427.8 L566.0,1427.8 L566.0,1428.4 L588.0,1428.4 L588.0,1429.0 L610.0,1429.0 L610.0,1428.6 L632.0,1428.6 L632.0,1429.1 L654.0,1429.1 L654.0,1428.6 L676.0,1428.6 L676.0,1427.3 L698.0,1427.3 L698.0,1429.0 L720.0,1429.0 L720.0,1428.4 L742.0,1428.4 L742.0,1427.9 L764.0,1427.9 L764.0,1427.7 L786.0,1427.7 L786.0,1429.0 L808.0,1429.0 L808.0,1428.5 L830.0,1428.5 L830.0,1429.2 L852.0,1429.2 L852.0,1428.9 L874.0,1428.9 L874.0,1429.3 L896.0,1429.3 L896.0,1428.5 L918.0,1428.5 L918.0,1428.8 L940.0,1428.8 L940.0,1428.6 L962.0,1428.6 L962.0,1427.9 L984.0,1427.9 L984.0,1429.3 L1006.0,1429.3 L1006.0,1428.1 L1028.0,1428.1 L1028.0,1429.0 L1050.0,1429.0 L1050.0,1429.4 L1072.0,1429.4 L1072.0,1428.8 L1094.0,1428.8 L1094.0,1427.8 L1101.3,1427.8 L1101.3,1429.2 L1101.3,1531.0 L230.0,1531.0 Z" fill="#EAB839" fill-opacity="0.1" stroke="none"/>
<path d="M230.0,1486.2 L239.0,1486.2 L240.0,1478.4 L253.0,1478.4 L254.0,1474.3 L268.0,1474.3 L270.0,1476.8 L282.0,1476.8 L284.0,1437.6 L296.0,1437.6 L297.5,1427.2 L298.0,1427.9 L320.0,1427.9 L320.0,1427.9 L342.0,1427.9 L342.0,1427.8 L364.0,1427.8 L364.0,1426.5 L386.0,1426.5 L386.0,1427.3 L408.0,1427.3 L408.0,1427.1 L430.0,1427.1 L430.0,1427.2 L452.0,1427.2 L452.0,1426.6 L474.0,1426.6 L474.0,1426.7 L496.0,1426.7 L496.0,1427.1 L518.0,1427.1 L518.0,1426.8 L540.0,1426.8 L540.0,1427.1 L562.0,1427.1 L562.0,1426.4 L584.0,1426.4 L584.0,1426.5 L606.0,1426.5 L606.0,1427.5 L628.0,1427.5 L628.0,1427.1 L650.0,1427.1 L650.0,1427.2 L672.0,1427.2 L672.0,1427.6 L694.0,1427.6 L694.0,1427.0 L716.0,1427.0 L716.0,1426.5 L738.0,1426.5 L738.0,1427.7 L760.0,1427.7 L760.0,1427.3 L782.0,1427.3 L782.0,1427.5 L804.0,1427.5 L804.0,1427.4 L826.0,1427.4 L826.0,1428.0 L848.0,1428.0 L848.0,1427.0 L870.0,1427.0 L870.0,1427.6 L892.0,1427.6 L892.0,1427.0 L914.0,1427.0 L914.0,1427.3 L936.0,1427.3 L936.0,1427.5 L958.0,1427.5 L958.0,1426.9 L980.0,1426.9 L980.0,1426.5 L1002.0,1426.5 L1002.0,1427.2 L1024.0,1427.2 L1024.0,1427.5 L1046.0,1427.5 L1046.0,1427.3 L1068.0,1427.3 L1068.0,1427.1 L1090.0,1427.1 L1090.0,1427.4 L1101.3,1427.4 L1101.3,1426.7 L1101.3,1531.0 L230.0,1531.0 Z" fill="#6ED0E0" fill-opacity="0.1" stroke="none"/>
<path d="M230.0,1451.7 L232.0,1444.8 L239.5,1444.8 L240.0,1436.0 L245.7,1436.0 L246.0,1432.2 L255.0,1432.2 L256.0,1426.6 L269.0,1426.6 L272.0,1432.0 L274.0,1414.0 L281.8,1414.0 L285.0,1374.8 L289.0,1374.8 L290.0,1341.8 L296.0,1341.8 L297.5,1332.4 L303.8,1332.4 L305.0,1325.5 L306.0,1325.2 L316.0,1325.2 L316.0,1325.8 L326.0,1325.8 L326.0,1325.8 L336.0,1325.8 L336.0,1325.8 L346.0,1325.8 L346.0,1325.6 L356.0,1325.6 L356.0,1326.3 L366.0,1326.3 L366.0,1326.5 L376.0,1326.5 L376.0,1326.4 L386.0,1326.4 L386.0,1326.7 L396.0,1326.7 L396.0,1326.6 L406.0,1326.6 L406.0,1326.4 L416.0,1326.4 L416.0,1326.6 L426.0,1326.6 L426.0,1326.7 L436.0,1326.7 L436.0,1326.1 L446.0,1326.1 L446.0,1326.8 L456.0,1326.8 L456.0,1326.2 L466.0,1326.2 L466.0,1326.2 L476.0,1326.2 L476.0,1326.0 L486.0,1326.0 L486.0,1327.0 L496.0,1327.0 L496.0,1326.7 L506.0,1326.7 L506.0,1328.1 L516.0,1328.1 L516.0,1329.6 L526.0,1329.6 L526.0,1329.0 L536.0,1329.0 L536.0,1329.3 L546.0,1329.3 L546.0,1328.7 L556.0,1328.7 L556.0,1327.1 L566.0,1327.1 L566.0,1327.4 L576.0,1327.4 L576.0,1326.8 L586.0,1326.8 L586.0,1326.5 L596.0,1326.5 L596.0,1327.1 L606.0,1327.1 L606.0,1326.4 L616.0,1326.4 L616.0,1327.1 L626.0,1327.1 L626.0,1326.6 L636.0,1326.6 L636.0,1326.6 L646.0,1326.6 L646.0,1326.4 L656.0,1326.4 L656.0,1327.7 L666.0,1327.7 L666.0,1329.2 L676.0,1329.2 L676.0,1329.0 L686.0,1329.0 L686.0,1329.9 L696.0,1329.9 L696.0,1328.2 L706.0,1328.2 L706.0,1327.3 L716.0,1327.3 L716.0,1326.7 L726.0,1326.7 L726.0,1327.4 L736.0,1327.4 L736.0,1327.2 L746.0,1327.2 L746.0,1327.0 L756.0,1327.0 L756.0,1327.0 L766.0,1327.0 L766.0,1326.8 L776.0,1326.8 L776.0,1326.9 L786.0,1326.9 L786.0,1326.2 L796.0,1326.2 L796.0,1326.5 L806.0,1326.5 L806.0,1328.3 L816.0,1328.3 L816.0,1329.2 L826.0,1329.2 L826.0,1329.9 L836.0,1329.9 L836.0,1329.7 L846.0,1329.7 L846.0,1327.6 L856.0,1327.6 L856.0,1326.8 L866.0,1326.8 L866.0,1326.9 L876.0,1326.9 L876.0,1326.8 L886.0,1326.8 L886.0,1327.3 L896.0,1327.3 L896.0,1326.7 L906.0,1326.7 L906.0,1326.2 L916.0,1326.2 L916.0,1326.3 L926.0,1326.3 L926.0,1326.8 L936.0,1326.8 L936.0,1327.1 L946.0,1327.1 L946.0,1326.5 L956.0,1326.5 L956.0,1328.0 L966.0,1328.0 L966.0,1329.6 L976.0,1329.6 L976.0,1329.7 L986.0,1329.7 L986.0,1329.1 L996.0,1329.1 L996.0,1327.8 L1006.0,1327.8 L1006.0,1327.1 L1016.0,1327.1 L1016.0,1327.2 L1026.0,1327.2 L1026.0,1326.8 L1036.0,1326.8 L1036.0,1326.8 L1046.0,1326.8 L1046.0,1327.1 L1056.0,1327.1 L1056.0,1327.7 L1066.0,1327.7 L1066.0,1327.2 L1076.0,1327.2 L1076.0,1327.5 L1086.0,1327.5 L1086.0,1327.2 L1096.0,1327.2 L1096.0,1327.1 L1101.3,1327.1 L1101.3,1327.1" fill="none" stroke="#7EB26D" stroke-width="2" stroke-linejoin="round"/>
<path d="M230.0,1492.5 L232.0,1488.7 L243.0,1488.7 L244.0,1485.6 L259.0,1485.6 L260.0,1481.5 L272.0,1481.5 L273.0,1467.4 L287.0,1467.4 L288.0,1434.4 L300.0,1434.4 L301.0,1428.0 L302.0,1428.9 L324.0,1428.9 L324.0,1427.3 L346.0,1427.3 L346.0,1427.1 L368.0,1427.1 L368.0,1429.0 L390.0,1429.0 L390.0,1427.4 L412.0,1427.4 L412.0,1427.3 L434.0,1427.3 L434.0,1428.4 L456.0,1428.4 L456.0,1427.8 L478.0,1427.8 L478.0,1428.9 L500.0,1428.9 L500.0,1427.6 L522.0,1427.6 L522.0,1429.1 L544.0,1429.1 L544.0,1427.8 L566.0,1427.8 L566.0,1428.4 L588.0,1428.4 L588.0,1429.0 L610.0,1429.0 L610.0,1428.6 L632.0,1428.6 L632.0,1429.1 L654.0,1429.1 L654.0,1428.6 L676.0,1428.6 L676.0,1427.3 L698.0,1427.3 L698.0,1429.0 L720.0,1429.0 L720.0,1428.4 L742.0,1428.4 L742.0,1427.9 L764.0,1427.9 L764.0,1427.7 L786.0,1427.7 L786.0,1429.0 L808.0,1429.0 L808.0,1428.5 L830.0,1428.5 L830.0,1429.2 L852.0,1429.2 L852.0,1428.9 L874.0,1428.9 L874.0,1429.3 L896.0,1429.3 L896.0,1428.5 L918.0,1428.5 L918.0,1428.8 L940.0,1428.8 L940.0,1428.6 L962.0,1428.6 L962.0,1427.9 L984.0,1427.9 L984.0,1429.3 L1006.0,1429.3 L1006.0,1428.1 L1028.0,1428.1 L1028.0,1429.0 L1050.0,1429.0 L1050.0,1429.4 L1072.0,1429.4 L1072.0,1428.8 L1094.0,1428.8 L1094.0,1427.8 L1101.3,1427.8 L1101.3,1429.2" fill="none" stroke="#EAB839" stroke-width="2" stroke-linejoin="round"/>
<path d="M230.0,1486.2 L239.0,1486.2 L240.0,1478.4 L253.0,1478.4 L254.0,1474.3 L268.0,1474.3 L270.0,1476.8 L282.0,1476.8 L284.0,1437.6 L296.0,1437.6 L297.5,1427.2 L298.0,1427.9 L320.0,1427.9 L320.0,1427.9 L342.0,1427.9 L342.0,1427.8 L364.0,1427.8 L364.0,1426.5 L386.0,1426.5 L386.0,1427.3 L408.0,1427.3 L408.0,1427.1 L430.0,1427.1 L430.0,1427.2 L452.0,1427.2 L452.0,1426.6 L474.0,1426.6 L474.0,1426.7 L496.0,1426.7 L496.0,1427.1 L518.0,1427.1 L518.0,1426.8 L540.0,1426.8 L540.0,1427.1 L562.0,1427.1 L562.0,1426.4 L584.0,1426.4 L584.0,1426.5 L606.0,1426.5 L606.0,1427.5 L628.0,1427.5 L628.0,1427.1 L650.0,1427.1 L650.0,1427.2 L672.0,1427.2 L672.0,1427.6 L694.0,1427.6 L694.0,1427.0 L716.0,1427.0 L716.0,1426.5 L738.0,1426.5 L738.0,1427.7 L760.0,1427.7 L760.0,1427.3 L782.0,1427.3 L782.0,1427.5 L804.0,1427.5 L804.0,1427.4 L826.0,1427.4 L826.0,1428.0 L848.0,1428.0 L848.0,1427.0 L870.0,1427.0 L870.0,1427.6 L892.0,1427.6 L892.0,1427.0 L914.0,1427.0 L914.0,1427.3 L936.0,1427.3 L936.0,1427.5 L958.0,1427.5 L958.0,1426.9 L980.0,1426.9 L980.0,1426.5 L1002.0,1426.5 L1002.0,1427.2 L1024.0,1427.2 L1024.0,1427.5 L1046.0,1427.5 L1046.0,1427.3 L1068.0,1427.3 L1068.0,1427.1 L1090.0,1427.1 L1090.0,1427.4 L1101.3,1427.4 L1101.3,1426.7" fill="none" stroke="#6ED0E0" stroke-width="2" stroke-linejoin="round"/>
<g class="ax"><text x="219.5" y="1308.5" text-anchor="end" letter-spacing="0.5">80 K</text><text x="219.5" y="1366.0" text-anchor="end" letter-spacing="0.5">60 K</text><text x="219.5" y="1423.5" text-anchor="end" letter-spacing="0.5">40 K</text><text x="219.5" y="1481.0" text-anchor="end" letter-spacing="0.5">20 K</text><text x="219.5" y="1538.5" text-anchor="end" letter-spacing="0.5">0</text><text x="343.1" y="1566.0" text-anchor="middle" letter-spacing="0.3">16:05</text><text x="488.3" y="1566.0" text-anchor="middle" letter-spacing="0.3">16:10</text><text x="633.5" y="1566.0" text-anchor="middle" letter-spacing="0.3">16:15</text><text x="778.8" y="1566.0" text-anchor="middle" letter-spacing="0.3">16:20</text><text x="924.0" y="1566.0" text-anchor="middle" letter-spacing="0.3">16:25</text><text x="1069.2" y="1566.0" text-anchor="middle" letter-spacing="0.3">16:30</text></g></svg>
<div class="ldash" style="left:195.5px;top:1607.9px;background:#7EB26D"></div>
<div class="ltext" style="left:230.5px;top:1595.4px">total</div>
<div class="ldash" style="left:303.8px;top:1607.9px;background:#EAB839"></div>
<div class="ltext" style="left:338.8px;top:1595.4px">10.0.1.182:1234</div>
<div class="ldash" style="left:537.6px;top:1607.9px;background:#6ED0E0"></div>
<div class="ltext" style="left:572.6px;top:1595.4px">10.0.2.167:1234</div>
<svg class="abs" width="3218" height="1752" style="left:0;top:0"><g stroke="rgba(200,200,200,0.22)" stroke-width="2"><line x1="1244.0" y1="1301.0" x2="2117.6" y2="1301.0"/><line x1="1244.0" y1="1358.5" x2="2117.6" y2="1358.5"/><line x1="1244.0" y1="1416.0" x2="2117.6" y2="1416.0"/><line x1="1244.0" y1="1473.5" x2="2117.6" y2="1473.5"/><line x1="1244.0" y1="1531.0" x2="2117.6" y2="1531.0"/><line x1="1356.4" y1="1301.0" x2="1356.4" y2="1531.0"/><line x1="1502.0" y1="1301.0" x2="1502.0" y2="1531.0"/><line x1="1647.6" y1="1301.0" x2="1647.6" y2="1531.0"/><line x1="1793.2" y1="1301.0" x2="1793.2" y2="1531.0"/><line x1="1938.8" y1="1301.0" x2="1938.8" y2="1531.0"/><line x1="2084.4" y1="1301.0" x2="2084.4" y2="1531.0"/></g>
<path d="M1244.0,1482.4 L1270.0,1456.4 L1298.3,1430.3 L1328.0,1349.7 L1356.3,1352.8 L1386.1,1353.8 L1416.0,1356.9 L1444.2,1354.4 L1474.0,1359.0 L1503.2,1351.9 L1532.1,1353.8 L1561.0,1360.7 L1590.2,1347.2 L1619.0,1356.6 L1648.2,1353.8 L1677.6,1359.7 L1706.5,1356.6 L1735.4,1351.8 L1764.5,1353.1 L1793.4,1351.2 L1822.6,1348.7 L1852.4,1356.2 L1881.3,1354.7 L1910.5,1339.3 L1938.7,1352.2 L1968.5,1353.7 L1997.4,1357.5 L2026.6,1348.7 L2055.5,1352.2 L2084.7,1353.7 L2114.5,1350.9 L2114.5,1531.0 L1244.0,1531.0 Z" fill="#7EB26D" fill-opacity="0.1" stroke="none"/>
<path d="M1244.0,1475.2 L1270.0,1453.3 L1298.3,1390.5 L1328.0,1369.4 L1356.3,1371.6 L1386.1,1369.4 L1416.0,1373.2 L1444.2,1367.6 L1474.0,1373.2 L1503.2,1371.6 L1532.1,1373.8 L1561.0,1373.8 L1590.2,1365.4 L1619.0,1374.5 L1648.2,1370.7 L1677.6,1371.3 L1706.5,1371.0 L1735.4,1369.4 L1764.5,1368.8 L1793.4,1371.6 L1822.6,1371.6 L1852.4,1372.0 L1881.3,1367.5 L1910.5,1366.6 L1938.7,1367.5 L1968.5,1371.6 L1997.4,1372.9 L2026.6,1367.2 L2055.5,1368.8 L2084.7,1366.6 L2114.5,1370.0 L2114.5,1531.0 L1244.0,1531.0 Z" fill="#EAB839" fill-opacity="0.1" stroke="none"/>
<path d="M1244.0,1482.4 L1270.0,1456.4 L1298.3,1430.3 L1328.0,1349.7 L1356.3,1352.8 L1386.1,1353.8 L1416.0,1356.9 L1444.2,1354.4 L1474.0,1359.0 L1503.2,1351.9 L1532.1,1353.8 L1561.0,1360.7 L1590.2,1347.2 L1619.0,1356.6 L1648.2,1353.8 L1677.6,1359.7 L1706.5,1356.6 L1735.4,1351.8 L1764.5,1353.1 L1793.4,1351.2 L1822.6,1348.7 L1852.4,1356.2 L1881.3,1354.7 L1910.5,1339.3 L1938.7,1352.2 L1968.5,1353.7 L1997.4,1357.5 L2026.6,1348.7 L2055.5,1352.2 L2084.7,1353.7 L2114.5,1350.9" fill="none" stroke="#7EB26D" stroke-width="2" stroke-linejoin="round"/>
<path d="M1244.0,1475.2 L1270.0,1453.3 L1298.3,1390.5 L1328.0,1369.4 L1356.3,1371.6 L1386.1,1369.4 L1416.0,1373.2 L1444.2,1367.6 L1474.0,1373.2 L1503.2,1371.6 L1532.1,1373.8 L1561.0,1373.8 L1590.2,1365.4 L1619.0,1374.5 L1648.2,1370.7 L1677.6,1371.3 L1706.5,1371.0 L1735.4,1369.4 L1764.5,1368.8 L1793.4,1371.6 L1822.6,1371.6 L1852.4,1372.0 L1881.3,1367.5 L1910.5,1366.6 L1938.7,1367.5 L1968.5,1371.6 L1997.4,1372.9 L2026.6,1367.2 L2055.5,1368.8 L2084.7,1366.6 L2114.5,1370.0" fill="none" stroke="#EAB839" stroke-width="2" stroke-linejoin="round"/>
<g class="ax"><text x="1233.5" y="1308.5" text-anchor="end" letter-spacing="0.5">20 s</text><text x="1233.5" y="1366.0" text-anchor="end" letter-spacing="0.5">15 s</text><text x="1233.5" y="1423.5" text-anchor="end" letter-spacing="0.5">10 s</text><text x="1233.5" y="1481.0" text-anchor="end" letter-spacing="0.5">5 s</text><text x="1233.5" y="1538.5" text-anchor="end" letter-spacing="0.5">0 s</text><text x="1357.4" y="1566.0" text-anchor="middle" letter-spacing="0.3">16:05</text><text x="1503.0" y="1566.0" text-anchor="middle" letter-spacing="0.3">16:10</text><text x="1648.6" y="1566.0" text-anchor="middle" letter-spacing="0.3">16:15</text><text x="1794.2" y="1566.0" text-anchor="middle" letter-spacing="0.3">16:20</text><text x="1939.8" y="1566.0" text-anchor="middle" letter-spacing="0.3">16:25</text><text x="2085.4" y="1566.0" text-anchor="middle" letter-spacing="0.3">16:30</text></g></svg>
<div class="ldash" style="left:1212.0px;top:1607.9px;background:#7EB26D"></div>
<div class="ltext" style="left:1247.0px;top:1595.4px">10.0.1.182:1234</div>
<div class="ldash" style="left:1445.8px;top:1607.9px;background:#EAB839"></div>
<div class="ltext" style="left:1480.8px;top:1595.4px">10.0.2.167:1234</div>
<svg class="abs" width="3218" height="1752" style="left:0;top:0"><g stroke="rgba(200,200,200,0.22)" stroke-width="2"><line x1="2256.4" y1="1301.0" x2="3135.4" y2="1301.0"/><line x1="2256.4" y1="1369.0" x2="3135.4" y2="1369.0"/><line x1="2256.4" y1="1437.0" x2="3135.4" y2="1437.0"/><line x1="2256.4" y1="1505.0" x2="3135.4" y2="1505.0"/><line x1="2256.4" y1="1573.0" x2="3135.4" y2="1573.0"/><line x1="2369.5" y1="1301.0" x2="2369.5" y2="1573.0"/><line x1="2516.0" y1="1301.0" x2="2516.0" y2="1573.0"/><line x1="2662.5" y1="1301.0" x2="2662.5" y2="1573.0"/><line x1="2809.0" y1="1301.0" x2="2809.0" y2="1573.0"/><line x1="2955.5" y1="1301.0" x2="2955.5" y2="1573.0"/><line x1="3102.0" y1="1301.0" x2="3102.0" y2="1573.0"/></g>
<g class="ax"><text x="2245.9" y="1308.5" text-anchor="end" letter-spacing="0.5">1.0</text><text x="2245.9" y="1376.5" text-anchor="end" letter-spacing="0.5">0.5</text><text x="2245.9" y="1444.5" text-anchor="end" letter-spacing="0.5">0</text><text x="2245.9" y="1512.5" text-anchor="end" letter-spacing="0.5">-0.5</text><text x="2245.9" y="1580.5" text-anchor="end" letter-spacing="0.5">-1.0</text><text x="2370.5" y="1608.0" text-anchor="middle" letter-spacing="0.3">16:05</text><text x="2517.0" y="1608.0" text-anchor="middle" letter-spacing="0.3">16:10</text><text x="2663.5" y="1608.0" text-anchor="middle" letter-spacing="0.3">16:15</text><text x="2810.0" y="1608.0" text-anchor="middle" letter-spacing="0.3">16:20</text><text x="2956.5" y="1608.0" text-anchor="middle" letter-spacing="0.3">16:25</text><text x="3103.0" y="1608.0" text-anchor="middle" letter-spacing="0.3">16:30</text></g></svg>
<div class="nodata" style="left:2485.7px;top:1374.7px">No data</div>
<div class="panel" style="left:152.00px;top:1664px;width:1000.67px;height:440px"></div>
<div class="ptitle" style="left:134.3px;top:1676.5px">Meter Received Count / Second</div>
<div class="panel" style="left:1168.67px;top:1664px;width:1000.67px;height:440px"></div>
<div class="ptitle" style="left:1151.0px;top:1676.5px">Meter Analysis Time (Increment) / Minute</div>
<div class="panel" style="left:2185.33px;top:1664px;width:1000.67px;height:440px"></div>
<div class="ptitle" style="left:2167.7px;top:1676.5px">Meter Analysis Error Count (Increment) / Minute</div>
<svg class="abs" width="3218" height="1752" style="left:0;top:0"><g class="ax"><text x="210" y="1764" text-anchor="end">1.0</text><text x="1273" y="1764" text-anchor="end">1.0 s</text><text x="2244.4" y="1764" text-anchor="end">1.0</text></g></svg></div></body></html>
